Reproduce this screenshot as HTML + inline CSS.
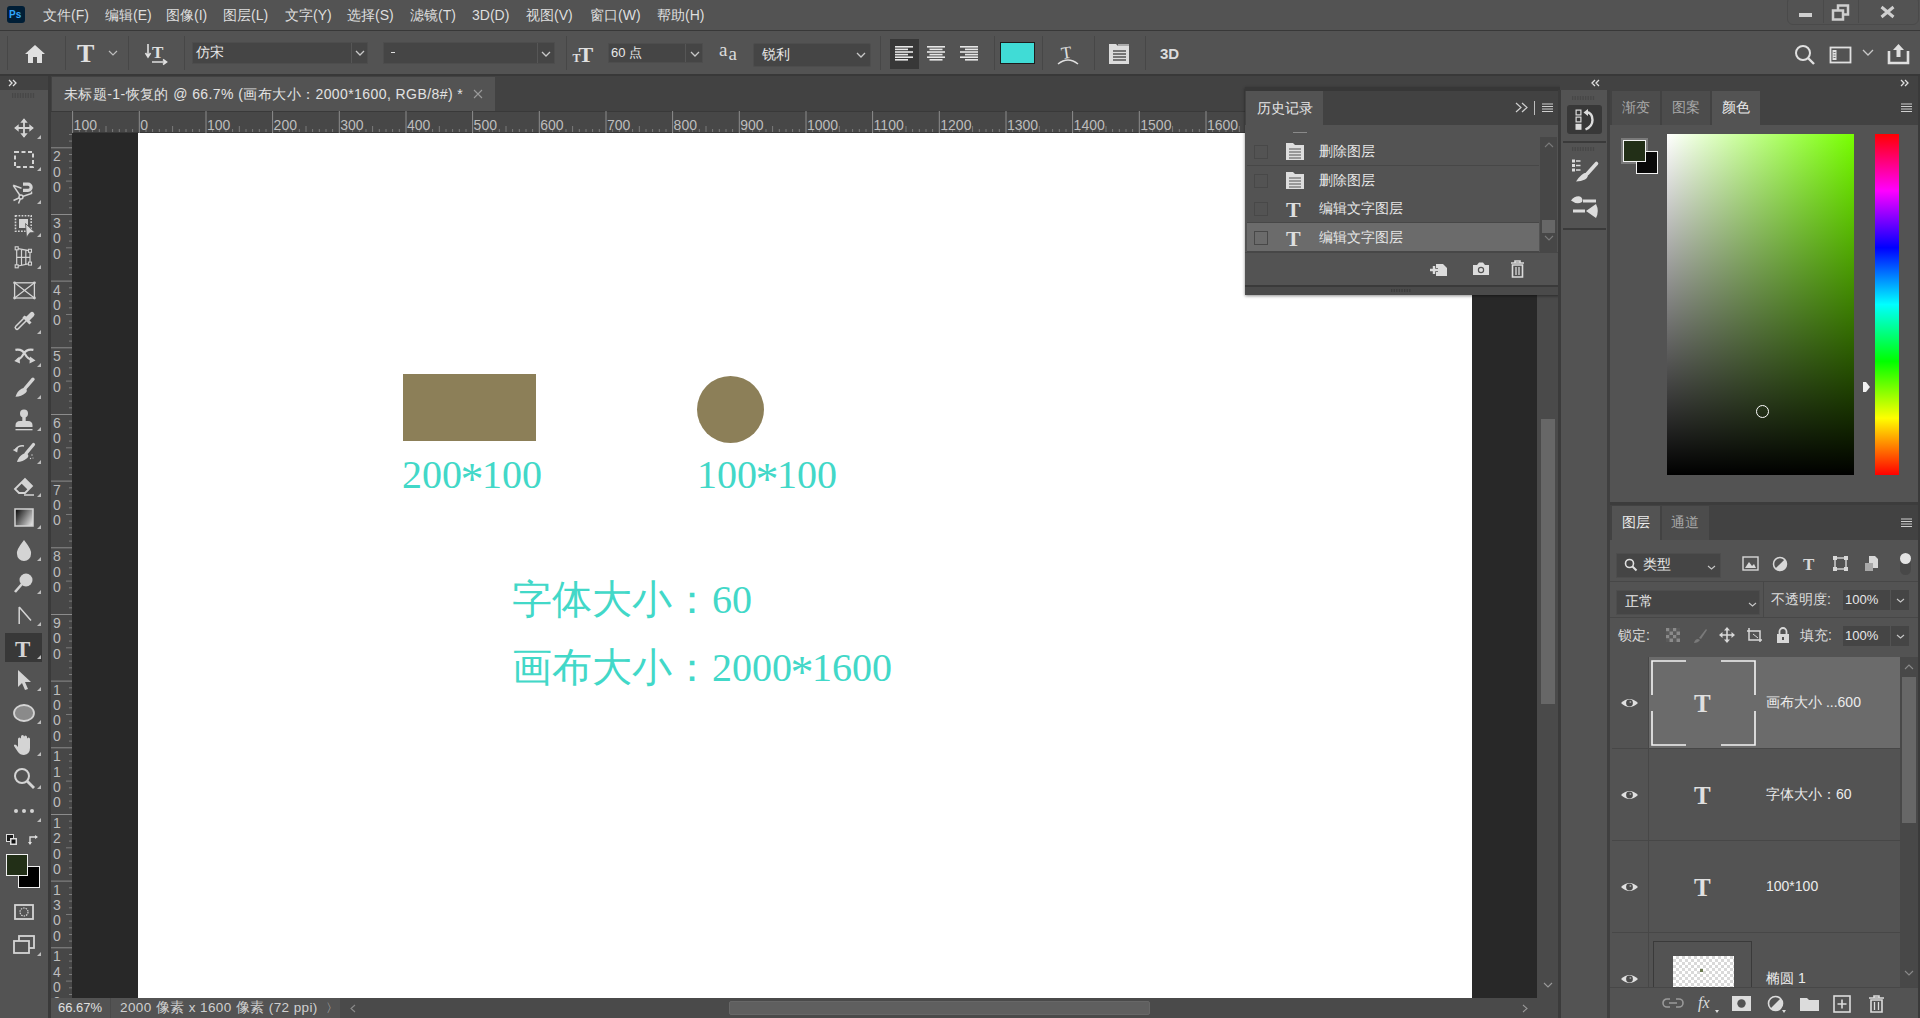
<!DOCTYPE html><html><head><meta charset="utf-8"><style>
html,body{margin:0;padding:0;width:1920px;height:1018px;overflow:hidden;background:#535353;}
body{position:relative;font-family:"Liberation Sans",sans-serif;}
.t{position:absolute;white-space:nowrap;}
svg{overflow:visible}
</style></head><body>
<div style="position:absolute;left:0px;top:0px;width:1920px;height:30px;background:#535353;"></div>
<div style="position:absolute;left:0px;top:30px;width:1920px;height:1px;background:#383838;"></div>
<div style="position:absolute;left:7px;top:6px;width:18px;height:17px;background:#001e36;border-radius:3px;"></div>
<div class="t" style="left:9px;top:7px;font-size:10px;line-height:15px;color:#31a8ff;font-weight:bold;">Ps</div>
<div class="t" style="left:43px;top:5px;font-size:14px;line-height:20px;color:#dedede;">文件(F)</div>
<div class="t" style="left:105px;top:5px;font-size:14px;line-height:20px;color:#dedede;">编辑(E)</div>
<div class="t" style="left:166px;top:5px;font-size:14px;line-height:20px;color:#dedede;">图像(I)</div>
<div class="t" style="left:223px;top:5px;font-size:14px;line-height:20px;color:#dedede;">图层(L)</div>
<div class="t" style="left:285px;top:5px;font-size:14px;line-height:20px;color:#dedede;">文字(Y)</div>
<div class="t" style="left:347px;top:5px;font-size:14px;line-height:20px;color:#dedede;">选择(S)</div>
<div class="t" style="left:410px;top:5px;font-size:14px;line-height:20px;color:#dedede;">滤镜(T)</div>
<div class="t" style="left:472px;top:5px;font-size:14px;line-height:20px;color:#dedede;">3D(D)</div>
<div class="t" style="left:526px;top:5px;font-size:14px;line-height:20px;color:#dedede;">视图(V)</div>
<div class="t" style="left:590px;top:5px;font-size:14px;line-height:20px;color:#dedede;">窗口(W)</div>
<div class="t" style="left:657px;top:5px;font-size:14px;line-height:20px;color:#dedede;">帮助(H)</div>
<div style="position:absolute;left:1787px;top:-4px;width:130px;height:27px;border:1px solid #4a4a4a;border-radius:6px;"></div>
<div style="position:absolute;left:1799px;top:13px;width:13px;height:4px;background:#cfcfcf;"></div>
<div style="position:absolute;left:1823px;top:0px;width:1px;height:23px;background:#4a4a4a;"></div>
<div style="position:absolute;left:1858px;top:0px;width:1px;height:23px;background:#4a4a4a;"></div>
<svg style="position:absolute;left:1831px;top:4px;" width="20" height="17" viewBox="0 0 20 17"><rect x="7" y="1.5" width="10" height="9" fill="none" stroke="#cfcfcf" stroke-width="2.5"/><rect x="2" y="6.5" width="10" height="9" fill="#535353" stroke="#cfcfcf" stroke-width="2.5"/></svg>
<svg style="position:absolute;left:1880px;top:6px;" width="15" height="12" viewBox="0 0 15 12"><path d="M1.5 1 L13.5 11 M13.5 1 L1.5 11" stroke="#cfcfcf" stroke-width="3"/></svg>
<div style="position:absolute;left:0px;top:31px;width:1920px;height:44px;background:#535353;"></div>
<div style="position:absolute;left:0px;top:74px;width:1920px;height:2px;background:#383838;"></div>
<div style="position:absolute;left:7px;top:36px;width:1px;height:34px;background:#474747;"></div>
<div style="position:absolute;left:65px;top:36px;width:1px;height:34px;background:#474747;"></div>
<div style="position:absolute;left:128px;top:36px;width:1px;height:34px;background:#474747;"></div>
<div style="position:absolute;left:184px;top:36px;width:1px;height:34px;background:#474747;"></div>
<div style="position:absolute;left:566px;top:36px;width:1px;height:34px;background:#474747;"></div>
<div style="position:absolute;left:880px;top:36px;width:1px;height:34px;background:#474747;"></div>
<div style="position:absolute;left:994px;top:36px;width:1px;height:34px;background:#474747;"></div>
<div style="position:absolute;left:1042px;top:36px;width:1px;height:34px;background:#474747;"></div>
<div style="position:absolute;left:1094px;top:36px;width:1px;height:34px;background:#474747;"></div>
<div style="position:absolute;left:1145px;top:36px;width:1px;height:34px;background:#474747;"></div>
<svg style="position:absolute;left:24px;top:44px;" width="22" height="20" viewBox="0 0 22 20"><path d="M11 1 L1 10 L4 10 L4 19 L9 19 L9 13 L13 13 L13 19 L18 19 L18 10 L21 10 Z" fill="#e0e0e0"/></svg>
<div class="t" style="left:77px;top:39px;font-size:26px;line-height:30px;color:#e0e0e0;font-family:'Liberation Serif',serif;font-weight:bold;">T</div>
<svg style="position:absolute;left:108px;top:50px;" width="10" height="6" viewBox="0 0 10 6"><path d="M1 1 L5 5 L9 1" fill="none" stroke="#bdbdbd" stroke-width="1.2"/></svg>
<svg style="position:absolute;left:145px;top:42px;" width="24" height="24" viewBox="0 0 24 24"><path d="M3 2 V14 M0.5 11 L3 15 L5.5 11" fill="none" stroke="#e0e0e0" stroke-width="1.6"/><text x="7" y="16" font-family="Liberation Serif" font-weight="bold" font-size="17" fill="#e0e0e0">T</text><path d="M7 20 H21 M18 17.5 L21.5 20 L18 22.5" fill="none" stroke="#e0e0e0" stroke-width="1.6"/></svg>
<div style="position:absolute;left:192px;top:42px;width:176px;height:22px;background:#454545;border:1px solid #4d4d4d;box-sizing:border-box;"></div>
<div style="position:absolute;left:351px;top:43px;width:1px;height:20px;background:#565656;"></div>
<div class="t" style="left:196px;top:43px;font-size:14px;line-height:18px;color:#e8e8e8;">仿宋</div>
<svg style="position:absolute;left:355px;top:50px;" width="10" height="6" viewBox="0 0 10 6"><path d="M1 1 L5 5 L9 1" fill="none" stroke="#c8c8c8" stroke-width="1.3"/></svg>
<div style="position:absolute;left:383px;top:42px;width:172px;height:22px;background:#454545;border:1px solid #4d4d4d;box-sizing:border-box;"></div>
<div style="position:absolute;left:537px;top:43px;width:1px;height:20px;background:#565656;"></div>
<div style="position:absolute;left:391px;top:52px;width:4px;height:1px;background:#e0e0e0;"></div>
<svg style="position:absolute;left:541px;top:51px;" width="10" height="6" viewBox="0 0 10 6"><path d="M1 1 L5 5 L9 1" fill="none" stroke="#c8c8c8" stroke-width="1.3"/></svg>
<svg style="position:absolute;left:572px;top:41px;" width="24" height="22" viewBox="0 0 24 22"><text x="0.5" y="21" font-family="Liberation Serif" font-weight="bold" font-size="12" fill="#e0e0e0">T</text><text x="6.5" y="20.5" font-family="Liberation Serif" font-weight="bold" font-size="22" fill="#e0e0e0">T</text></svg>
<div style="position:absolute;left:608px;top:43px;width:95px;height:20px;background:#454545;border:1px solid #4d4d4d;box-sizing:border-box;"></div>
<div style="position:absolute;left:685px;top:44px;width:1px;height:18px;background:#565656;"></div>
<div class="t" style="left:611px;top:44px;font-size:13px;line-height:17px;color:#e8e8e8;">60 点</div>
<svg style="position:absolute;left:690px;top:51px;" width="10" height="6" viewBox="0 0 10 6"><path d="M1 1 L5 5 L9 1" fill="none" stroke="#c8c8c8" stroke-width="1.3"/></svg>
<svg style="position:absolute;left:718px;top:43px;" width="22" height="22" viewBox="0 0 22 22"><text x="1" y="12.5" font-family="Liberation Serif" font-size="19" fill="#dcdcdc">a</text><text x="10.5" y="16.8" font-family="Liberation Serif" font-size="19" fill="#dcdcdc">a</text></svg>
<div style="position:absolute;left:753px;top:43px;width:118px;height:24px;background:#454545;border:1px solid #4d4d4d;box-sizing:border-box;border-radius:2px;"></div>
<div class="t" style="left:762px;top:45px;font-size:14px;line-height:18px;color:#e8e8e8;">锐利</div>
<svg style="position:absolute;left:856px;top:52px;" width="10" height="6" viewBox="0 0 10 6"><path d="M1 1 L5 5 L9 1" fill="none" stroke="#c8c8c8" stroke-width="1.3"/></svg>
<div style="position:absolute;left:890px;top:39px;width:29px;height:30px;background:#383838;"></div>
<svg style="position:absolute;left:895px;top:44px;" width="18" height="18" viewBox="0 0 18 18"><rect x="0" y="2.0" width="18" height="1.6" fill="#e6e6e6"/><rect x="0" y="4.6" width="13" height="1.6" fill="#e6e6e6"/><rect x="0" y="7.2" width="18" height="1.6" fill="#e6e6e6"/><rect x="0" y="9.8" width="13" height="1.6" fill="#e6e6e6"/><rect x="0" y="12.4" width="18" height="1.6" fill="#e6e6e6"/><rect x="0" y="15.0" width="13" height="1.6" fill="#e6e6e6"/></svg>
<svg style="position:absolute;left:927px;top:44px;" width="18" height="18" viewBox="0 0 18 18"><rect x="0.0" y="2.0" width="18" height="1.6" fill="#e6e6e6"/><rect x="2.5" y="4.6" width="13" height="1.6" fill="#e6e6e6"/><rect x="0.0" y="7.2" width="18" height="1.6" fill="#e6e6e6"/><rect x="2.5" y="9.8" width="13" height="1.6" fill="#e6e6e6"/><rect x="0.0" y="12.4" width="18" height="1.6" fill="#e6e6e6"/><rect x="2.5" y="15.0" width="13" height="1.6" fill="#e6e6e6"/></svg>
<svg style="position:absolute;left:960px;top:44px;" width="18" height="18" viewBox="0 0 18 18"><rect x="0" y="2.0" width="18" height="1.6" fill="#e6e6e6"/><rect x="5" y="4.6" width="13" height="1.6" fill="#e6e6e6"/><rect x="0" y="7.2" width="18" height="1.6" fill="#e6e6e6"/><rect x="5" y="9.8" width="13" height="1.6" fill="#e6e6e6"/><rect x="0" y="12.4" width="18" height="1.6" fill="#e6e6e6"/><rect x="5" y="15.0" width="13" height="1.6" fill="#e6e6e6"/></svg>
<div style="position:absolute;left:1000px;top:42px;width:35px;height:22px;background:#40dcd6;border:1px solid #1c1c1c;box-sizing:border-box;"></div>
<svg style="position:absolute;left:1056px;top:41px;" width="24" height="26" viewBox="0 0 24 26"><text x="5" y="17" font-family="Liberation Serif" font-size="17" fill="#e0e0e0" transform="rotate(-8 12 10)">T</text><path d="M2 23 Q12 15 22 23" fill="none" stroke="#e0e0e0" stroke-width="1.5"/></svg>
<svg style="position:absolute;left:1108px;top:43px;" width="22" height="22" viewBox="0 0 22 22"><path d="M1 1 H8 L10 3 H21 V21 H1 Z" fill="#dcdcdc"/><rect x="10" y="1" width="11" height="2" fill="#aaa"/><path d="M5 8 H18 M5 11 H18 M5 14 H18 M5 17 H18" stroke="#535353" stroke-width="1.3"/></svg>
<div class="t" style="left:1160px;top:44px;font-size:15px;line-height:20px;color:#dcdcdc;font-weight:bold;">3D</div>
<svg style="position:absolute;left:1794px;top:44px;" width="22" height="22" viewBox="0 0 22 22"><circle cx="9" cy="9" r="7" fill="none" stroke="#e0e0e0" stroke-width="2"/><path d="M14 14 L20 20" stroke="#e0e0e0" stroke-width="2.4"/></svg>
<svg style="position:absolute;left:1829px;top:46px;" width="24" height="19" viewBox="0 0 24 19"><rect x="1.5" y="1.5" width="20" height="15" fill="none" stroke="#e0e0e0" stroke-width="1.8"/><rect x="3.5" y="4" width="4" height="10" fill="#e0e0e0"/><path d="M4.5 6.5 H6.5 M4.5 9 H6.5 M4.5 11.5 H6.5" stroke="#535353" stroke-width="0.8"/></svg>
<svg style="position:absolute;left:1862px;top:49px;" width="12" height="7" viewBox="0 0 12 7"><path d="M1 1 L6 6 L11 1" fill="none" stroke="#c8c8c8" stroke-width="1.3"/></svg>
<svg style="position:absolute;left:1887px;top:42px;" width="24" height="23" viewBox="0 0 24 23"><path d="M2 9 V21 H21 V9" fill="none" stroke="#e0e0e0" stroke-width="2.6"/><path d="M11.5 2 L6 8 H9.5 V15 H13.5 V8 H17 Z" fill="#e0e0e0"/></svg>
<div style="position:absolute;left:0px;top:76px;width:48px;height:942px;background:#535353;"></div>
<div style="position:absolute;left:0px;top:76px;width:48px;height:14px;background:#424242;"></div>
<svg style="position:absolute;left:8px;top:79px;" width="10" height="8" viewBox="0 0 10 8"><path d="M1 1 L4 4 L1 7 M5 1 L8 4 L5 7" fill="none" stroke="#e0e0e0" stroke-width="1.3"/></svg>
<div style="position:absolute;left:48px;top:76px;width:3px;height:942px;background:#3a3a3a;"></div>
<svg style="position:absolute;left:12px;top:93px;" width="24" height="5" viewBox="0 0 24 5"><rect x="0.0" y="0" width="1.3" height="5" fill="#474747"/><rect x="2.6" y="0" width="1.3" height="5" fill="#474747"/><rect x="5.2" y="0" width="1.3" height="5" fill="#474747"/><rect x="7.800000000000001" y="0" width="1.3" height="5" fill="#474747"/><rect x="10.4" y="0" width="1.3" height="5" fill="#474747"/><rect x="13.0" y="0" width="1.3" height="5" fill="#474747"/><rect x="15.600000000000001" y="0" width="1.3" height="5" fill="#474747"/><rect x="18.2" y="0" width="1.3" height="5" fill="#474747"/><rect x="20.8" y="0" width="1.3" height="5" fill="#474747"/></svg>
<svg style="position:absolute;left:12px;top:116px;" width="24" height="24" viewBox="0 0 24 24"><g transform="translate(12 12) scale(0.82) translate(-12 -12)"><path d="M12 1 V23 M1 12 H23" stroke="#d4d4d4" stroke-width="2.2"/><path d="M12 0 L7.5 5.5 H16.5 Z M12 24 L7.5 18.5 H16.5 Z M0 12 L5.5 7.5 V16.5 Z M24 12 L18.5 7.5 V16.5 Z" fill="#d4d4d4"/></g></svg>
<svg style="position:absolute;left:37px;top:135px;" width="4" height="4" viewBox="0 0 4 4"><path d="M4 0 V4 H0 Z" fill="#bdbdbd"/></svg>
<svg style="position:absolute;left:12px;top:148px;" width="24" height="24" viewBox="0 0 24 24"><rect x="3" y="4" width="18" height="15" fill="none" stroke="#d4d4d4" stroke-width="2" stroke-dasharray="4 2.5"/></svg>
<svg style="position:absolute;left:37px;top:167px;" width="4" height="4" viewBox="0 0 4 4"><path d="M4 0 V4 H0 Z" fill="#bdbdbd"/></svg>
<svg style="position:absolute;left:12px;top:181px;" width="24" height="24" viewBox="0 0 24 24"><path d="M11 3.1 H16 A3.15 3.15 0 0 1 16 9.4 H11" fill="none" stroke="#d4d4d4" stroke-width="3.2"/><path d="M1.2 4.3 L9.5 7.2 M1.2 4.3 L9 16 M9 16 L1.5 19.5 M9 16 L6.5 22.5 M9 16 L19.5 12.5 L19.5 10.5" fill="none" stroke="#d4d4d4" stroke-width="1.5"/><circle cx="9" cy="16" r="2" fill="#535353" stroke="#d4d4d4" stroke-width="1.4"/></svg>
<svg style="position:absolute;left:37px;top:200px;" width="4" height="4" viewBox="0 0 4 4"><path d="M4 0 V4 H0 Z" fill="#bdbdbd"/></svg>
<svg style="position:absolute;left:12px;top:214px;" width="26" height="26" viewBox="0 0 26 26"><rect x="3.5" y="1.7" width="15.7" height="15.5" fill="none" stroke="#d4d4d4" stroke-width="1.6" stroke-dasharray="1.7 1.35"/><rect x="7" y="5" width="9" height="9" fill="#d4d4d4"/><path d="M13.5 9.5 L23 18.5 L17.8 18.8 L14.5 23.5 Z" fill="#d4d4d4" stroke="#535353" stroke-width="0.8"/></svg>
<svg style="position:absolute;left:37px;top:233px;" width="4" height="4" viewBox="0 0 4 4"><path d="M4 0 V4 H0 Z" fill="#bdbdbd"/></svg>
<svg style="position:absolute;left:12px;top:246px;" width="24" height="24" viewBox="0 0 24 24"><path d="M4.7 2.3 L18 4.8 L18 17.6 L4.7 20.3 Z M9.5 3.2 V19.4 M13.8 4 V18.5 M4.7 11.3 H18" fill="none" stroke="#d4d4d4" stroke-width="1.2"/><g fill="#535353" stroke="#d4d4d4" stroke-width="1.1"><rect x="3.2" y="0.8" width="3" height="3"/><rect x="16.5" y="3.3" width="3" height="3"/><rect x="16.5" y="16.1" width="3" height="3"/><rect x="3.2" y="18.8" width="3" height="3"/></g></svg>
<svg style="position:absolute;left:37px;top:265px;" width="4" height="4" viewBox="0 0 4 4"><path d="M4 0 V4 H0 Z" fill="#bdbdbd"/></svg>
<svg style="position:absolute;left:12px;top:278px;" width="24" height="24" viewBox="0 0 24 24"><rect x="2.6" y="4.8" width="19.8" height="15.2" fill="none" stroke="#d4d4d4" stroke-width="1.3"/><path d="M2.6 4.8 L22.4 20 M22.4 4.8 L2.6 20" stroke="#d4d4d4" stroke-width="1.2"/><g fill="#d4d4d4"><circle cx="2.6" cy="4.8" r="1.4"/><circle cx="22.4" cy="4.8" r="1.4"/><circle cx="2.6" cy="20" r="1.4"/><circle cx="22.4" cy="20" r="1.4"/></g></svg>
<svg style="position:absolute;left:12px;top:311px;" width="24" height="24" viewBox="0 0 24 24"><path d="M5 16.5 L13.5 8" stroke="#d4d4d4" stroke-width="5" stroke-linecap="round"/><path d="M5 16.5 L13.5 8" stroke="#535353" stroke-width="2" stroke-linecap="round"/><path d="M11.5 5.5 L18.5 12.5" stroke="#d4d4d4" stroke-width="3"/><path d="M16 7.5 L20 3.5" stroke="#d4d4d4" stroke-width="5" stroke-linecap="round"/></svg>
<svg style="position:absolute;left:37px;top:330px;" width="4" height="4" viewBox="0 0 4 4"><path d="M4 0 V4 H0 Z" fill="#bdbdbd"/></svg>
<svg style="position:absolute;left:12px;top:344px;" width="26" height="24" viewBox="0 0 26 24"><path d="M3.4 5.8 Q10 4.5 13 10 Q16 15.5 20 15.8 M21.4 5.8 Q14.5 4.5 11.5 10 Q8.5 15.5 5 15.8" fill="none" stroke="#d4d4d4" stroke-width="2.2"/><path d="M23.5 16.5 L18 12.5 L17.5 19.5 Z M2.3 17 L7.5 12.5 L8 19.5 Z" fill="#d4d4d4"/></svg>
<svg style="position:absolute;left:37px;top:363px;" width="4" height="4" viewBox="0 0 4 4"><path d="M4 0 V4 H0 Z" fill="#bdbdbd"/></svg>
<svg style="position:absolute;left:12px;top:376px;" width="24" height="24" viewBox="0 0 24 24"><path d="M21 3.2 L13 12.5" stroke="#d4d4d4" stroke-width="3.4" stroke-linecap="round"/><path d="M3.5 20.8 Q5 15.5 9.5 12.8 Q12.5 11 14.2 13 Q15.8 15 13.5 17 Q9.5 20.5 3.5 20.8 Z" fill="#d4d4d4"/></svg>
<svg style="position:absolute;left:37px;top:395px;" width="4" height="4" viewBox="0 0 4 4"><path d="M4 0 V4 H0 Z" fill="#bdbdbd"/></svg>
<svg style="position:absolute;left:12px;top:408px;" width="24" height="24" viewBox="0 0 24 24"><circle cx="12" cy="5.5" r="4" fill="#d4d4d4"/><rect x="10.3" y="8" width="3.4" height="5" fill="#d4d4d4"/><path d="M3.5 17.5 Q3.5 13 8 13 H16 Q20.5 13 20.5 17.5 V19 H3.5 Z" fill="#d4d4d4"/><rect x="3.5" y="21" width="17" height="1.3" fill="#d4d4d4"/></svg>
<svg style="position:absolute;left:37px;top:427px;" width="4" height="4" viewBox="0 0 4 4"><path d="M4 0 V4 H0 Z" fill="#bdbdbd"/></svg>
<svg style="position:absolute;left:12px;top:441px;" width="24" height="24" viewBox="0 0 24 24"><path d="M21.5 3.5 L14 12.5" stroke="#d4d4d4" stroke-width="3.2" stroke-linecap="round"/><path d="M5 21 Q6.5 15.7 11 13 Q14 11.2 15.7 13.2 Q17.3 15.2 15 17.2 Q11 20.7 5 21 Z" fill="#d4d4d4"/><path d="M3.5 8.5 Q7 4 12 5" fill="none" stroke="#d4d4d4" stroke-width="1.6"/><path d="M0.8 9 L6 6.5 L5.2 11.5 Z" fill="#d4d4d4"/><g fill="#d4d4d4"><circle cx="20" cy="14" r="0.7"/><circle cx="18.5" cy="17.5" r="0.7"/><circle cx="21" cy="17" r="0.6"/></g></svg>
<svg style="position:absolute;left:37px;top:460px;" width="4" height="4" viewBox="0 0 4 4"><path d="M4 0 V4 H0 Z" fill="#bdbdbd"/></svg>
<svg style="position:absolute;left:12px;top:474px;" width="24" height="24" viewBox="0 0 24 24"><path d="M3 15 L13 5 L20 12 L13 19 L7 19 Z" fill="none" stroke="#d4d4d4" stroke-width="1.8"/><path d="M13 5 L20 12 L16 16 L9 9 Z" fill="#d4d4d4"/><path d="M12 21 H22" stroke="#d4d4d4" stroke-width="1.5"/></svg>
<svg style="position:absolute;left:37px;top:493px;" width="4" height="4" viewBox="0 0 4 4"><path d="M4 0 V4 H0 Z" fill="#bdbdbd"/></svg>
<svg style="position:absolute;left:14px;top:508px" width="20" height="19"><defs><linearGradient id="gg" x1="0" y1="0.2" x2="1" y2="0.8"><stop offset="0" stop-color="#111"/><stop offset="1" stop-color="#e0e0e0"/></linearGradient></defs><rect x="1" y="1" width="18" height="17" fill="url(#gg)" stroke="#d4d4d4" stroke-width="1.5"/></svg>
<svg style="position:absolute;left:37px;top:525px;" width="4" height="4" viewBox="0 0 4 4"><path d="M4 0 V4 H0 Z" fill="#bdbdbd"/></svg>
<svg style="position:absolute;left:12px;top:538px;" width="24" height="24" viewBox="0 0 24 24"><path d="M12 2 Q20 12 19 16 A7 7 0 0 1 5 16 Q4 12 12 2 Z" fill="#d4d4d4"/></svg>
<svg style="position:absolute;left:37px;top:557px;" width="4" height="4" viewBox="0 0 4 4"><path d="M4 0 V4 H0 Z" fill="#bdbdbd"/></svg>
<svg style="position:absolute;left:12px;top:571px;" width="24" height="24" viewBox="0 0 24 24"><circle cx="14" cy="9" r="6.5" fill="#d4d4d4"/><path d="M10 13 L3 21" stroke="#d4d4d4" stroke-width="2.6"/></svg>
<svg style="position:absolute;left:37px;top:590px;" width="4" height="4" viewBox="0 0 4 4"><path d="M4 0 V4 H0 Z" fill="#bdbdbd"/></svg>
<svg style="position:absolute;left:12px;top:603px;" width="24" height="24" viewBox="0 0 24 24"><path d="M7.2 4 V21 M7.2 4 L19 17.5" fill="none" stroke="#d4d4d4" stroke-width="1.5"/></svg>
<svg style="position:absolute;left:37px;top:622px;" width="4" height="4" viewBox="0 0 4 4"><path d="M4 0 V4 H0 Z" fill="#bdbdbd"/></svg>
<div style="position:absolute;left:5px;top:633px;width:37px;height:29px;background:#383838;"></div>
<svg style="position:absolute;left:12px;top:636px;" width="24" height="24" viewBox="0 0 24 24"><text x="3" y="21" font-family="Liberation Serif" font-weight="bold" font-size="23" fill="#d4d4d4">T</text></svg>
<svg style="position:absolute;left:37px;top:655px;" width="4" height="4" viewBox="0 0 4 4"><path d="M4 0 V4 H0 Z" fill="#bdbdbd"/></svg>
<svg style="position:absolute;left:12px;top:668px;" width="24" height="24" viewBox="0 0 24 24"><path d="M6 2 L19 14 L13 14 L16 21 L13 22 L10 15 L6 19 Z" fill="#d4d4d4"/></svg>
<svg style="position:absolute;left:37px;top:687px;" width="4" height="4" viewBox="0 0 4 4"><path d="M4 0 V4 H0 Z" fill="#bdbdbd"/></svg>
<svg style="position:absolute;left:12px;top:701px;" width="24" height="24" viewBox="0 0 24 24"><ellipse cx="12" cy="12" rx="10" ry="8" fill="#8a8a8a" stroke="#d4d4d4" stroke-width="1.8"/></svg>
<svg style="position:absolute;left:37px;top:720px;" width="4" height="4" viewBox="0 0 4 4"><path d="M4 0 V4 H0 Z" fill="#bdbdbd"/></svg>
<svg style="position:absolute;left:12px;top:733px;" width="24" height="24" viewBox="0 0 24 24"><path d="M6 13 V6 Q6 4.5 7.5 4.5 Q9 4.5 9 6 V11 V3.5 Q9 2 10.5 2 Q12 2 12 3.5 V11 V4 Q12 2.5 13.5 2.5 Q15 2.5 15 4 V11 V6 Q15 4.5 16.5 4.5 Q18 4.5 18 6 V15 Q18 21 12 22 Q8 22 6 19 L2 13 Q1.5 11.5 3 11.5 Q4.5 11.5 6 14 Z" fill="#d4d4d4"/></svg>
<svg style="position:absolute;left:37px;top:752px;" width="4" height="4" viewBox="0 0 4 4"><path d="M4 0 V4 H0 Z" fill="#bdbdbd"/></svg>
<svg style="position:absolute;left:12px;top:766px;" width="24" height="24" viewBox="0 0 24 24"><circle cx="10" cy="10" r="7" fill="none" stroke="#d4d4d4" stroke-width="2"/><path d="M15 15 L22 22" stroke="#d4d4d4" stroke-width="2.8"/></svg>
<svg style="position:absolute;left:37px;top:785px;" width="4" height="4" viewBox="0 0 4 4"><path d="M4 0 V4 H0 Z" fill="#bdbdbd"/></svg>
<svg style="position:absolute;left:12px;top:799px;" width="24" height="24" viewBox="0 0 24 24"><circle cx="4" cy="12" r="2" fill="#d4d4d4"/><circle cx="12" cy="12" r="2" fill="#d4d4d4"/><circle cx="20" cy="12" r="2" fill="#d4d4d4"/></svg>
<svg style="position:absolute;left:37px;top:818px;" width="4" height="4" viewBox="0 0 4 4"><path d="M4 0 V4 H0 Z" fill="#bdbdbd"/></svg>
<svg style="position:absolute;left:6px;top:834px;" width="12" height="12" viewBox="0 0 12 12"><rect x="0.5" y="0.5" width="7" height="7" fill="#1a1a1a" stroke="#ddd" stroke-width="1"/><rect x="4" y="4" width="7" height="7" fill="#ddd"/><rect x="5.5" y="5.5" width="4" height="4" fill="#111"/></svg>
<svg style="position:absolute;left:27px;top:833px;" width="14" height="14" viewBox="0 0 14 14"><path d="M3 11 V4 H10" fill="none" stroke="#ddd" stroke-width="1.4"/><path d="M1 9 L3 12 L5 9 Z M8 2 L11 4 L8 6 Z" fill="#ddd"/></svg>
<div style="position:absolute;left:18px;top:866px;width:22px;height:22px;background:#000;border:1.5px solid #f0f0f0;box-sizing:border-box;"></div>
<div style="position:absolute;left:6px;top:854px;width:22px;height:22px;background:#222f17;border:1.5px solid #f0f0f0;box-sizing:border-box;"></div>
<svg style="position:absolute;left:12px;top:900px;" width="24" height="24" viewBox="0 0 24 24"><rect x="3" y="5" width="18" height="14" fill="none" stroke="#d4d4d4" stroke-width="1.8"/><circle cx="12" cy="12" r="4" fill="none" stroke="#d4d4d4" stroke-width="1.2" stroke-dasharray="1.5 1"/></svg>
<svg style="position:absolute;left:12px;top:933px;" width="24" height="24" viewBox="0 0 24 24"><rect x="7" y="3" width="15" height="12" fill="none" stroke="#d4d4d4" stroke-width="1.8"/><rect x="2" y="8" width="15" height="12" fill="#535353" stroke="#d4d4d4" stroke-width="1.8"/></svg>
<svg style="position:absolute;left:37px;top:952px;" width="4" height="4" viewBox="0 0 4 4"><path d="M4 0 V4 H0 Z" fill="#bdbdbd"/></svg>
<div style="position:absolute;left:51px;top:76px;width:1509px;height:35px;background:#424242;"></div>
<div style="position:absolute;left:52px;top:77px;width:443px;height:34px;background:#535353;"></div>
<div class="t" style="left:64px;top:85px;font-size:14px;line-height:18px;color:#e2e2e2;letter-spacing:0.42px;">未标题-1-恢复的 @ 66.7% (画布大小：2000*1600, RGB/8#) *</div>
<svg style="position:absolute;left:473px;top:89px;" width="10" height="10" viewBox="0 0 10 10"><path d="M1 1 L9 9 M9 1 L1 9" stroke="#9a9a9a" stroke-width="1.1"/></svg>
<div style="position:absolute;left:51px;top:111px;width:1509px;height:22px;background:#474747;"></div>
<div style="position:absolute;left:51px;top:133px;width:21px;height:865px;background:#474747;"></div>
<div style="position:absolute;left:51px;top:111px;width:1509px;height:1px;background:#393939;"></div>
<div style="position:absolute;left:72px;top:132px;width:1465px;height:1px;background:#393939;"></div>
<div style="position:absolute;left:72px;top:133px;width:1465px;height:865px;background:#282828;"></div>
<div style="position:absolute;left:138px;top:133px;width:1334px;height:865px;background:#ffffff;"></div>
<div style="position:absolute;left:1537px;top:133px;width:23px;height:865px;background:#4a4a4a;"></div>
<div style="position:absolute;left:1541px;top:419px;width:14px;height:285px;background:#676767;"></div>
<svg style="position:absolute;left:1543px;top:982px;" width="10" height="6" viewBox="0 0 10 6"><path d="M1 1 L5 5 L9 1" fill="none" stroke="#9a9a9a" stroke-width="1.1"/></svg>
<div style="position:absolute;left:51px;top:998px;width:1509px;height:20px;background:#4a4a4a;"></div>
<div style="position:absolute;left:51px;top:998px;width:59px;height:20px;background:#535353;"></div>
<div style="position:absolute;left:111px;top:998px;width:229px;height:20px;background:#535353;"></div>
<div class="t" style="left:58px;top:999px;font-size:13px;line-height:18px;color:#e0e0e0;">66.67%</div>
<div class="t" style="left:120px;top:999px;font-size:13.5px;line-height:18px;color:#d0d0d0;letter-spacing:0.4px;">2000 像素 x 1600 像素 (72 ppi)</div>
<div class="t" style="left:326px;top:999px;font-size:12px;line-height:18px;color:#bdbdbd;">〉</div>
<svg style="position:absolute;left:350px;top:1004px;" width="6" height="9" viewBox="0 0 6 9"><path d="M5 1 L1 4.5 L5 8" fill="none" stroke="#8a8a8a" stroke-width="1.1"/></svg>
<div style="position:absolute;left:729px;top:1001px;width:421px;height:14px;background:#5f5f5f;border:1px solid #676767;box-sizing:border-box;border-radius:2px;"></div>
<svg style="position:absolute;left:1522px;top:1004px;" width="6" height="9" viewBox="0 0 6 9"><path d="M1 1 L5 4.5 L1 8" fill="none" stroke="#9a9a9a" stroke-width="1.1"/></svg>
<svg style="position:absolute;left:51px;top:111px;overflow:hidden" width="1194" height="22"><g><rect x="21.1" y="0" width="1" height="22" fill="#8c8c8c"/><rect x="27.8" y="18" width="1" height="3" fill="#7a7a7a"/><rect x="34.5" y="18" width="1" height="3" fill="#7a7a7a"/><rect x="41.1" y="18" width="1" height="3" fill="#7a7a7a"/><rect x="47.8" y="18" width="1" height="3" fill="#7a7a7a"/><rect x="54.5" y="15" width="1" height="6" fill="#7a7a7a"/><rect x="61.1" y="18" width="1" height="3" fill="#7a7a7a"/><rect x="67.8" y="18" width="1" height="3" fill="#7a7a7a"/><rect x="74.5" y="18" width="1" height="3" fill="#7a7a7a"/><rect x="81.1" y="18" width="1" height="3" fill="#7a7a7a"/><text x="22.6" y="19" font-family="Liberation Sans" font-size="14" fill="#bdbdbd">100</text><rect x="87.8" y="0" width="1" height="22" fill="#8c8c8c"/><rect x="94.5" y="18" width="1" height="3" fill="#7a7a7a"/><rect x="101.1" y="18" width="1" height="3" fill="#7a7a7a"/><rect x="107.8" y="18" width="1" height="3" fill="#7a7a7a"/><rect x="114.5" y="18" width="1" height="3" fill="#7a7a7a"/><rect x="121.1" y="15" width="1" height="6" fill="#7a7a7a"/><rect x="127.8" y="18" width="1" height="3" fill="#7a7a7a"/><rect x="134.5" y="18" width="1" height="3" fill="#7a7a7a"/><rect x="141.1" y="18" width="1" height="3" fill="#7a7a7a"/><rect x="147.8" y="18" width="1" height="3" fill="#7a7a7a"/><text x="89.3" y="19" font-family="Liberation Sans" font-size="14" fill="#bdbdbd">0</text><rect x="154.5" y="0" width="1" height="22" fill="#8c8c8c"/><rect x="161.1" y="18" width="1" height="3" fill="#7a7a7a"/><rect x="167.8" y="18" width="1" height="3" fill="#7a7a7a"/><rect x="174.5" y="18" width="1" height="3" fill="#7a7a7a"/><rect x="181.1" y="18" width="1" height="3" fill="#7a7a7a"/><rect x="187.8" y="15" width="1" height="6" fill="#7a7a7a"/><rect x="194.5" y="18" width="1" height="3" fill="#7a7a7a"/><rect x="201.1" y="18" width="1" height="3" fill="#7a7a7a"/><rect x="207.8" y="18" width="1" height="3" fill="#7a7a7a"/><rect x="214.5" y="18" width="1" height="3" fill="#7a7a7a"/><text x="156.0" y="19" font-family="Liberation Sans" font-size="14" fill="#bdbdbd">100</text><rect x="221.1" y="0" width="1" height="22" fill="#8c8c8c"/><rect x="227.8" y="18" width="1" height="3" fill="#7a7a7a"/><rect x="234.5" y="18" width="1" height="3" fill="#7a7a7a"/><rect x="241.1" y="18" width="1" height="3" fill="#7a7a7a"/><rect x="247.8" y="18" width="1" height="3" fill="#7a7a7a"/><rect x="254.5" y="15" width="1" height="6" fill="#7a7a7a"/><rect x="261.1" y="18" width="1" height="3" fill="#7a7a7a"/><rect x="267.8" y="18" width="1" height="3" fill="#7a7a7a"/><rect x="274.5" y="18" width="1" height="3" fill="#7a7a7a"/><rect x="281.1" y="18" width="1" height="3" fill="#7a7a7a"/><text x="222.6" y="19" font-family="Liberation Sans" font-size="14" fill="#bdbdbd">200</text><rect x="287.8" y="0" width="1" height="22" fill="#8c8c8c"/><rect x="294.5" y="18" width="1" height="3" fill="#7a7a7a"/><rect x="301.1" y="18" width="1" height="3" fill="#7a7a7a"/><rect x="307.8" y="18" width="1" height="3" fill="#7a7a7a"/><rect x="314.5" y="18" width="1" height="3" fill="#7a7a7a"/><rect x="321.1" y="15" width="1" height="6" fill="#7a7a7a"/><rect x="327.8" y="18" width="1" height="3" fill="#7a7a7a"/><rect x="334.5" y="18" width="1" height="3" fill="#7a7a7a"/><rect x="341.1" y="18" width="1" height="3" fill="#7a7a7a"/><rect x="347.8" y="18" width="1" height="3" fill="#7a7a7a"/><text x="289.3" y="19" font-family="Liberation Sans" font-size="14" fill="#bdbdbd">300</text><rect x="354.5" y="0" width="1" height="22" fill="#8c8c8c"/><rect x="361.1" y="18" width="1" height="3" fill="#7a7a7a"/><rect x="367.8" y="18" width="1" height="3" fill="#7a7a7a"/><rect x="374.5" y="18" width="1" height="3" fill="#7a7a7a"/><rect x="381.1" y="18" width="1" height="3" fill="#7a7a7a"/><rect x="387.8" y="15" width="1" height="6" fill="#7a7a7a"/><rect x="394.5" y="18" width="1" height="3" fill="#7a7a7a"/><rect x="401.1" y="18" width="1" height="3" fill="#7a7a7a"/><rect x="407.8" y="18" width="1" height="3" fill="#7a7a7a"/><rect x="414.5" y="18" width="1" height="3" fill="#7a7a7a"/><text x="356.0" y="19" font-family="Liberation Sans" font-size="14" fill="#bdbdbd">400</text><rect x="421.1" y="0" width="1" height="22" fill="#8c8c8c"/><rect x="427.8" y="18" width="1" height="3" fill="#7a7a7a"/><rect x="434.5" y="18" width="1" height="3" fill="#7a7a7a"/><rect x="441.1" y="18" width="1" height="3" fill="#7a7a7a"/><rect x="447.8" y="18" width="1" height="3" fill="#7a7a7a"/><rect x="454.5" y="15" width="1" height="6" fill="#7a7a7a"/><rect x="461.1" y="18" width="1" height="3" fill="#7a7a7a"/><rect x="467.8" y="18" width="1" height="3" fill="#7a7a7a"/><rect x="474.5" y="18" width="1" height="3" fill="#7a7a7a"/><rect x="481.1" y="18" width="1" height="3" fill="#7a7a7a"/><text x="422.6" y="19" font-family="Liberation Sans" font-size="14" fill="#bdbdbd">500</text><rect x="487.8" y="0" width="1" height="22" fill="#8c8c8c"/><rect x="494.5" y="18" width="1" height="3" fill="#7a7a7a"/><rect x="501.1" y="18" width="1" height="3" fill="#7a7a7a"/><rect x="507.8" y="18" width="1" height="3" fill="#7a7a7a"/><rect x="514.5" y="18" width="1" height="3" fill="#7a7a7a"/><rect x="521.1" y="15" width="1" height="6" fill="#7a7a7a"/><rect x="527.8" y="18" width="1" height="3" fill="#7a7a7a"/><rect x="534.5" y="18" width="1" height="3" fill="#7a7a7a"/><rect x="541.1" y="18" width="1" height="3" fill="#7a7a7a"/><rect x="547.8" y="18" width="1" height="3" fill="#7a7a7a"/><text x="489.3" y="19" font-family="Liberation Sans" font-size="14" fill="#bdbdbd">600</text><rect x="554.5" y="0" width="1" height="22" fill="#8c8c8c"/><rect x="561.1" y="18" width="1" height="3" fill="#7a7a7a"/><rect x="567.8" y="18" width="1" height="3" fill="#7a7a7a"/><rect x="574.5" y="18" width="1" height="3" fill="#7a7a7a"/><rect x="581.1" y="18" width="1" height="3" fill="#7a7a7a"/><rect x="587.8" y="15" width="1" height="6" fill="#7a7a7a"/><rect x="594.5" y="18" width="1" height="3" fill="#7a7a7a"/><rect x="601.1" y="18" width="1" height="3" fill="#7a7a7a"/><rect x="607.8" y="18" width="1" height="3" fill="#7a7a7a"/><rect x="614.5" y="18" width="1" height="3" fill="#7a7a7a"/><text x="556.0" y="19" font-family="Liberation Sans" font-size="14" fill="#bdbdbd">700</text><rect x="621.1" y="0" width="1" height="22" fill="#8c8c8c"/><rect x="627.8" y="18" width="1" height="3" fill="#7a7a7a"/><rect x="634.5" y="18" width="1" height="3" fill="#7a7a7a"/><rect x="641.1" y="18" width="1" height="3" fill="#7a7a7a"/><rect x="647.8" y="18" width="1" height="3" fill="#7a7a7a"/><rect x="654.5" y="15" width="1" height="6" fill="#7a7a7a"/><rect x="661.1" y="18" width="1" height="3" fill="#7a7a7a"/><rect x="667.8" y="18" width="1" height="3" fill="#7a7a7a"/><rect x="674.5" y="18" width="1" height="3" fill="#7a7a7a"/><rect x="681.1" y="18" width="1" height="3" fill="#7a7a7a"/><text x="622.6" y="19" font-family="Liberation Sans" font-size="14" fill="#bdbdbd">800</text><rect x="687.8" y="0" width="1" height="22" fill="#8c8c8c"/><rect x="694.5" y="18" width="1" height="3" fill="#7a7a7a"/><rect x="701.1" y="18" width="1" height="3" fill="#7a7a7a"/><rect x="707.8" y="18" width="1" height="3" fill="#7a7a7a"/><rect x="714.5" y="18" width="1" height="3" fill="#7a7a7a"/><rect x="721.1" y="15" width="1" height="6" fill="#7a7a7a"/><rect x="727.8" y="18" width="1" height="3" fill="#7a7a7a"/><rect x="734.5" y="18" width="1" height="3" fill="#7a7a7a"/><rect x="741.1" y="18" width="1" height="3" fill="#7a7a7a"/><rect x="747.8" y="18" width="1" height="3" fill="#7a7a7a"/><text x="689.3" y="19" font-family="Liberation Sans" font-size="14" fill="#bdbdbd">900</text><rect x="754.5" y="0" width="1" height="22" fill="#8c8c8c"/><rect x="761.1" y="18" width="1" height="3" fill="#7a7a7a"/><rect x="767.8" y="18" width="1" height="3" fill="#7a7a7a"/><rect x="774.5" y="18" width="1" height="3" fill="#7a7a7a"/><rect x="781.1" y="18" width="1" height="3" fill="#7a7a7a"/><rect x="787.8" y="15" width="1" height="6" fill="#7a7a7a"/><rect x="794.5" y="18" width="1" height="3" fill="#7a7a7a"/><rect x="801.1" y="18" width="1" height="3" fill="#7a7a7a"/><rect x="807.8" y="18" width="1" height="3" fill="#7a7a7a"/><rect x="814.5" y="18" width="1" height="3" fill="#7a7a7a"/><text x="756.0" y="19" font-family="Liberation Sans" font-size="14" fill="#bdbdbd">1000</text><rect x="821.1" y="0" width="1" height="22" fill="#8c8c8c"/><rect x="827.8" y="18" width="1" height="3" fill="#7a7a7a"/><rect x="834.5" y="18" width="1" height="3" fill="#7a7a7a"/><rect x="841.1" y="18" width="1" height="3" fill="#7a7a7a"/><rect x="847.8" y="18" width="1" height="3" fill="#7a7a7a"/><rect x="854.5" y="15" width="1" height="6" fill="#7a7a7a"/><rect x="861.1" y="18" width="1" height="3" fill="#7a7a7a"/><rect x="867.8" y="18" width="1" height="3" fill="#7a7a7a"/><rect x="874.5" y="18" width="1" height="3" fill="#7a7a7a"/><rect x="881.1" y="18" width="1" height="3" fill="#7a7a7a"/><text x="822.6" y="19" font-family="Liberation Sans" font-size="14" fill="#bdbdbd">1100</text><rect x="887.8" y="0" width="1" height="22" fill="#8c8c8c"/><rect x="894.5" y="18" width="1" height="3" fill="#7a7a7a"/><rect x="901.1" y="18" width="1" height="3" fill="#7a7a7a"/><rect x="907.8" y="18" width="1" height="3" fill="#7a7a7a"/><rect x="914.5" y="18" width="1" height="3" fill="#7a7a7a"/><rect x="921.1" y="15" width="1" height="6" fill="#7a7a7a"/><rect x="927.8" y="18" width="1" height="3" fill="#7a7a7a"/><rect x="934.5" y="18" width="1" height="3" fill="#7a7a7a"/><rect x="941.1" y="18" width="1" height="3" fill="#7a7a7a"/><rect x="947.8" y="18" width="1" height="3" fill="#7a7a7a"/><text x="889.3" y="19" font-family="Liberation Sans" font-size="14" fill="#bdbdbd">1200</text><rect x="954.5" y="0" width="1" height="22" fill="#8c8c8c"/><rect x="961.1" y="18" width="1" height="3" fill="#7a7a7a"/><rect x="967.8" y="18" width="1" height="3" fill="#7a7a7a"/><rect x="974.5" y="18" width="1" height="3" fill="#7a7a7a"/><rect x="981.1" y="18" width="1" height="3" fill="#7a7a7a"/><rect x="987.8" y="15" width="1" height="6" fill="#7a7a7a"/><rect x="994.5" y="18" width="1" height="3" fill="#7a7a7a"/><rect x="1001.1" y="18" width="1" height="3" fill="#7a7a7a"/><rect x="1007.8" y="18" width="1" height="3" fill="#7a7a7a"/><rect x="1014.5" y="18" width="1" height="3" fill="#7a7a7a"/><text x="956.0" y="19" font-family="Liberation Sans" font-size="14" fill="#bdbdbd">1300</text><rect x="1021.1" y="0" width="1" height="22" fill="#8c8c8c"/><rect x="1027.8" y="18" width="1" height="3" fill="#7a7a7a"/><rect x="1034.5" y="18" width="1" height="3" fill="#7a7a7a"/><rect x="1041.1" y="18" width="1" height="3" fill="#7a7a7a"/><rect x="1047.8" y="18" width="1" height="3" fill="#7a7a7a"/><rect x="1054.5" y="15" width="1" height="6" fill="#7a7a7a"/><rect x="1061.1" y="18" width="1" height="3" fill="#7a7a7a"/><rect x="1067.8" y="18" width="1" height="3" fill="#7a7a7a"/><rect x="1074.5" y="18" width="1" height="3" fill="#7a7a7a"/><rect x="1081.1" y="18" width="1" height="3" fill="#7a7a7a"/><text x="1022.6" y="19" font-family="Liberation Sans" font-size="14" fill="#bdbdbd">1400</text><rect x="1087.8" y="0" width="1" height="22" fill="#8c8c8c"/><rect x="1094.5" y="18" width="1" height="3" fill="#7a7a7a"/><rect x="1101.1" y="18" width="1" height="3" fill="#7a7a7a"/><rect x="1107.8" y="18" width="1" height="3" fill="#7a7a7a"/><rect x="1114.5" y="18" width="1" height="3" fill="#7a7a7a"/><rect x="1121.1" y="15" width="1" height="6" fill="#7a7a7a"/><rect x="1127.8" y="18" width="1" height="3" fill="#7a7a7a"/><rect x="1134.5" y="18" width="1" height="3" fill="#7a7a7a"/><rect x="1141.1" y="18" width="1" height="3" fill="#7a7a7a"/><rect x="1147.8" y="18" width="1" height="3" fill="#7a7a7a"/><text x="1089.3" y="19" font-family="Liberation Sans" font-size="14" fill="#bdbdbd">1500</text><rect x="1154.5" y="0" width="1" height="22" fill="#8c8c8c"/><rect x="1161.1" y="18" width="1" height="3" fill="#7a7a7a"/><rect x="1167.8" y="18" width="1" height="3" fill="#7a7a7a"/><rect x="1174.5" y="18" width="1" height="3" fill="#7a7a7a"/><rect x="1181.1" y="18" width="1" height="3" fill="#7a7a7a"/><rect x="1187.8" y="15" width="1" height="6" fill="#7a7a7a"/><rect x="1194.5" y="18" width="1" height="3" fill="#7a7a7a"/><rect x="1201.1" y="18" width="1" height="3" fill="#7a7a7a"/><rect x="1207.8" y="18" width="1" height="3" fill="#7a7a7a"/><rect x="1214.5" y="18" width="1" height="3" fill="#7a7a7a"/><text x="1156.0" y="19" font-family="Liberation Sans" font-size="14" fill="#bdbdbd">1600</text></g></svg>
<svg style="position:absolute;left:51px;top:133px;overflow:hidden" width="21" height="865"><g><rect x="0" y="-119.0" width="21" height="1" fill="#8c8c8c"/><rect x="18" y="-112.4" width="3" height="1" fill="#7a7a7a"/><rect x="18" y="-105.7" width="3" height="1" fill="#7a7a7a"/><rect x="18" y="-99.0" width="3" height="1" fill="#7a7a7a"/><rect x="18" y="-92.4" width="3" height="1" fill="#7a7a7a"/><rect x="15" y="-85.7" width="6" height="1" fill="#7a7a7a"/><rect x="18" y="-79.0" width="3" height="1" fill="#7a7a7a"/><rect x="18" y="-72.4" width="3" height="1" fill="#7a7a7a"/><rect x="18" y="-65.7" width="3" height="1" fill="#7a7a7a"/><rect x="18" y="-59.0" width="3" height="1" fill="#7a7a7a"/><rect x="0" y="-52.4" width="21" height="1" fill="#8c8c8c"/><rect x="18" y="-45.7" width="3" height="1" fill="#7a7a7a"/><rect x="18" y="-39.0" width="3" height="1" fill="#7a7a7a"/><rect x="18" y="-32.4" width="3" height="1" fill="#7a7a7a"/><rect x="18" y="-25.7" width="3" height="1" fill="#7a7a7a"/><rect x="15" y="-19.0" width="6" height="1" fill="#7a7a7a"/><rect x="18" y="-12.4" width="3" height="1" fill="#7a7a7a"/><rect x="18" y="-5.7" width="3" height="1" fill="#7a7a7a"/><rect x="18" y="1.0" width="3" height="1" fill="#7a7a7a"/><rect x="18" y="7.6" width="3" height="1" fill="#7a7a7a"/><text x="2" y="-38.4" font-family="Liberation Sans" font-size="14" fill="#bdbdbd">1</text><text x="2" y="-23.1" font-family="Liberation Sans" font-size="14" fill="#bdbdbd">0</text><text x="2" y="-7.8" font-family="Liberation Sans" font-size="14" fill="#bdbdbd">0</text><rect x="0" y="14.3" width="21" height="1" fill="#8c8c8c"/><rect x="18" y="21.0" width="3" height="1" fill="#7a7a7a"/><rect x="18" y="27.6" width="3" height="1" fill="#7a7a7a"/><rect x="18" y="34.3" width="3" height="1" fill="#7a7a7a"/><rect x="18" y="41.0" width="3" height="1" fill="#7a7a7a"/><rect x="15" y="47.6" width="6" height="1" fill="#7a7a7a"/><rect x="18" y="54.3" width="3" height="1" fill="#7a7a7a"/><rect x="18" y="61.0" width="3" height="1" fill="#7a7a7a"/><rect x="18" y="67.6" width="3" height="1" fill="#7a7a7a"/><rect x="18" y="74.3" width="3" height="1" fill="#7a7a7a"/><text x="2" y="28.3" font-family="Liberation Sans" font-size="14" fill="#bdbdbd">2</text><text x="2" y="43.6" font-family="Liberation Sans" font-size="14" fill="#bdbdbd">0</text><text x="2" y="58.9" font-family="Liberation Sans" font-size="14" fill="#bdbdbd">0</text><rect x="0" y="81.0" width="21" height="1" fill="#8c8c8c"/><rect x="18" y="87.6" width="3" height="1" fill="#7a7a7a"/><rect x="18" y="94.3" width="3" height="1" fill="#7a7a7a"/><rect x="18" y="101.0" width="3" height="1" fill="#7a7a7a"/><rect x="18" y="107.6" width="3" height="1" fill="#7a7a7a"/><rect x="15" y="114.3" width="6" height="1" fill="#7a7a7a"/><rect x="18" y="121.0" width="3" height="1" fill="#7a7a7a"/><rect x="18" y="127.6" width="3" height="1" fill="#7a7a7a"/><rect x="18" y="134.3" width="3" height="1" fill="#7a7a7a"/><rect x="18" y="141.0" width="3" height="1" fill="#7a7a7a"/><text x="2" y="95.0" font-family="Liberation Sans" font-size="14" fill="#bdbdbd">3</text><text x="2" y="110.3" font-family="Liberation Sans" font-size="14" fill="#bdbdbd">0</text><text x="2" y="125.6" font-family="Liberation Sans" font-size="14" fill="#bdbdbd">0</text><rect x="0" y="147.6" width="21" height="1" fill="#8c8c8c"/><rect x="18" y="154.3" width="3" height="1" fill="#7a7a7a"/><rect x="18" y="161.0" width="3" height="1" fill="#7a7a7a"/><rect x="18" y="167.6" width="3" height="1" fill="#7a7a7a"/><rect x="18" y="174.3" width="3" height="1" fill="#7a7a7a"/><rect x="15" y="181.0" width="6" height="1" fill="#7a7a7a"/><rect x="18" y="187.6" width="3" height="1" fill="#7a7a7a"/><rect x="18" y="194.3" width="3" height="1" fill="#7a7a7a"/><rect x="18" y="201.0" width="3" height="1" fill="#7a7a7a"/><rect x="18" y="207.6" width="3" height="1" fill="#7a7a7a"/><text x="2" y="161.6" font-family="Liberation Sans" font-size="14" fill="#bdbdbd">4</text><text x="2" y="176.9" font-family="Liberation Sans" font-size="14" fill="#bdbdbd">0</text><text x="2" y="192.2" font-family="Liberation Sans" font-size="14" fill="#bdbdbd">0</text><rect x="0" y="214.3" width="21" height="1" fill="#8c8c8c"/><rect x="18" y="221.0" width="3" height="1" fill="#7a7a7a"/><rect x="18" y="227.6" width="3" height="1" fill="#7a7a7a"/><rect x="18" y="234.3" width="3" height="1" fill="#7a7a7a"/><rect x="18" y="241.0" width="3" height="1" fill="#7a7a7a"/><rect x="15" y="247.6" width="6" height="1" fill="#7a7a7a"/><rect x="18" y="254.3" width="3" height="1" fill="#7a7a7a"/><rect x="18" y="261.0" width="3" height="1" fill="#7a7a7a"/><rect x="18" y="267.6" width="3" height="1" fill="#7a7a7a"/><rect x="18" y="274.3" width="3" height="1" fill="#7a7a7a"/><text x="2" y="228.3" font-family="Liberation Sans" font-size="14" fill="#bdbdbd">5</text><text x="2" y="243.6" font-family="Liberation Sans" font-size="14" fill="#bdbdbd">0</text><text x="2" y="258.9" font-family="Liberation Sans" font-size="14" fill="#bdbdbd">0</text><rect x="0" y="281.0" width="21" height="1" fill="#8c8c8c"/><rect x="18" y="287.6" width="3" height="1" fill="#7a7a7a"/><rect x="18" y="294.3" width="3" height="1" fill="#7a7a7a"/><rect x="18" y="301.0" width="3" height="1" fill="#7a7a7a"/><rect x="18" y="307.6" width="3" height="1" fill="#7a7a7a"/><rect x="15" y="314.3" width="6" height="1" fill="#7a7a7a"/><rect x="18" y="321.0" width="3" height="1" fill="#7a7a7a"/><rect x="18" y="327.6" width="3" height="1" fill="#7a7a7a"/><rect x="18" y="334.3" width="3" height="1" fill="#7a7a7a"/><rect x="18" y="341.0" width="3" height="1" fill="#7a7a7a"/><text x="2" y="295.0" font-family="Liberation Sans" font-size="14" fill="#bdbdbd">6</text><text x="2" y="310.3" font-family="Liberation Sans" font-size="14" fill="#bdbdbd">0</text><text x="2" y="325.6" font-family="Liberation Sans" font-size="14" fill="#bdbdbd">0</text><rect x="0" y="347.6" width="21" height="1" fill="#8c8c8c"/><rect x="18" y="354.3" width="3" height="1" fill="#7a7a7a"/><rect x="18" y="361.0" width="3" height="1" fill="#7a7a7a"/><rect x="18" y="367.6" width="3" height="1" fill="#7a7a7a"/><rect x="18" y="374.3" width="3" height="1" fill="#7a7a7a"/><rect x="15" y="381.0" width="6" height="1" fill="#7a7a7a"/><rect x="18" y="387.6" width="3" height="1" fill="#7a7a7a"/><rect x="18" y="394.3" width="3" height="1" fill="#7a7a7a"/><rect x="18" y="401.0" width="3" height="1" fill="#7a7a7a"/><rect x="18" y="407.6" width="3" height="1" fill="#7a7a7a"/><text x="2" y="361.6" font-family="Liberation Sans" font-size="14" fill="#bdbdbd">7</text><text x="2" y="376.9" font-family="Liberation Sans" font-size="14" fill="#bdbdbd">0</text><text x="2" y="392.2" font-family="Liberation Sans" font-size="14" fill="#bdbdbd">0</text><rect x="0" y="414.3" width="21" height="1" fill="#8c8c8c"/><rect x="18" y="421.0" width="3" height="1" fill="#7a7a7a"/><rect x="18" y="427.6" width="3" height="1" fill="#7a7a7a"/><rect x="18" y="434.3" width="3" height="1" fill="#7a7a7a"/><rect x="18" y="441.0" width="3" height="1" fill="#7a7a7a"/><rect x="15" y="447.6" width="6" height="1" fill="#7a7a7a"/><rect x="18" y="454.3" width="3" height="1" fill="#7a7a7a"/><rect x="18" y="461.0" width="3" height="1" fill="#7a7a7a"/><rect x="18" y="467.6" width="3" height="1" fill="#7a7a7a"/><rect x="18" y="474.3" width="3" height="1" fill="#7a7a7a"/><text x="2" y="428.3" font-family="Liberation Sans" font-size="14" fill="#bdbdbd">8</text><text x="2" y="443.6" font-family="Liberation Sans" font-size="14" fill="#bdbdbd">0</text><text x="2" y="458.9" font-family="Liberation Sans" font-size="14" fill="#bdbdbd">0</text><rect x="0" y="481.0" width="21" height="1" fill="#8c8c8c"/><rect x="18" y="487.6" width="3" height="1" fill="#7a7a7a"/><rect x="18" y="494.3" width="3" height="1" fill="#7a7a7a"/><rect x="18" y="501.0" width="3" height="1" fill="#7a7a7a"/><rect x="18" y="507.6" width="3" height="1" fill="#7a7a7a"/><rect x="15" y="514.3" width="6" height="1" fill="#7a7a7a"/><rect x="18" y="521.0" width="3" height="1" fill="#7a7a7a"/><rect x="18" y="527.6" width="3" height="1" fill="#7a7a7a"/><rect x="18" y="534.3" width="3" height="1" fill="#7a7a7a"/><rect x="18" y="541.0" width="3" height="1" fill="#7a7a7a"/><text x="2" y="495.0" font-family="Liberation Sans" font-size="14" fill="#bdbdbd">9</text><text x="2" y="510.3" font-family="Liberation Sans" font-size="14" fill="#bdbdbd">0</text><text x="2" y="525.6" font-family="Liberation Sans" font-size="14" fill="#bdbdbd">0</text><rect x="0" y="547.6" width="21" height="1" fill="#8c8c8c"/><rect x="18" y="554.3" width="3" height="1" fill="#7a7a7a"/><rect x="18" y="561.0" width="3" height="1" fill="#7a7a7a"/><rect x="18" y="567.6" width="3" height="1" fill="#7a7a7a"/><rect x="18" y="574.3" width="3" height="1" fill="#7a7a7a"/><rect x="15" y="581.0" width="6" height="1" fill="#7a7a7a"/><rect x="18" y="587.6" width="3" height="1" fill="#7a7a7a"/><rect x="18" y="594.3" width="3" height="1" fill="#7a7a7a"/><rect x="18" y="601.0" width="3" height="1" fill="#7a7a7a"/><rect x="18" y="607.6" width="3" height="1" fill="#7a7a7a"/><text x="2" y="561.6" font-family="Liberation Sans" font-size="14" fill="#bdbdbd">1</text><text x="2" y="576.9" font-family="Liberation Sans" font-size="14" fill="#bdbdbd">0</text><text x="2" y="592.2" font-family="Liberation Sans" font-size="14" fill="#bdbdbd">0</text><text x="2" y="607.5" font-family="Liberation Sans" font-size="14" fill="#bdbdbd">0</text><rect x="0" y="614.3" width="21" height="1" fill="#8c8c8c"/><rect x="18" y="621.0" width="3" height="1" fill="#7a7a7a"/><rect x="18" y="627.6" width="3" height="1" fill="#7a7a7a"/><rect x="18" y="634.3" width="3" height="1" fill="#7a7a7a"/><rect x="18" y="641.0" width="3" height="1" fill="#7a7a7a"/><rect x="15" y="647.6" width="6" height="1" fill="#7a7a7a"/><rect x="18" y="654.3" width="3" height="1" fill="#7a7a7a"/><rect x="18" y="661.0" width="3" height="1" fill="#7a7a7a"/><rect x="18" y="667.6" width="3" height="1" fill="#7a7a7a"/><rect x="18" y="674.3" width="3" height="1" fill="#7a7a7a"/><text x="2" y="628.3" font-family="Liberation Sans" font-size="14" fill="#bdbdbd">1</text><text x="2" y="643.6" font-family="Liberation Sans" font-size="14" fill="#bdbdbd">1</text><text x="2" y="658.9" font-family="Liberation Sans" font-size="14" fill="#bdbdbd">0</text><text x="2" y="674.2" font-family="Liberation Sans" font-size="14" fill="#bdbdbd">0</text><rect x="0" y="681.0" width="21" height="1" fill="#8c8c8c"/><rect x="18" y="687.6" width="3" height="1" fill="#7a7a7a"/><rect x="18" y="694.3" width="3" height="1" fill="#7a7a7a"/><rect x="18" y="701.0" width="3" height="1" fill="#7a7a7a"/><rect x="18" y="707.6" width="3" height="1" fill="#7a7a7a"/><rect x="15" y="714.3" width="6" height="1" fill="#7a7a7a"/><rect x="18" y="721.0" width="3" height="1" fill="#7a7a7a"/><rect x="18" y="727.6" width="3" height="1" fill="#7a7a7a"/><rect x="18" y="734.3" width="3" height="1" fill="#7a7a7a"/><rect x="18" y="741.0" width="3" height="1" fill="#7a7a7a"/><text x="2" y="695.0" font-family="Liberation Sans" font-size="14" fill="#bdbdbd">1</text><text x="2" y="710.3" font-family="Liberation Sans" font-size="14" fill="#bdbdbd">2</text><text x="2" y="725.6" font-family="Liberation Sans" font-size="14" fill="#bdbdbd">0</text><text x="2" y="740.9" font-family="Liberation Sans" font-size="14" fill="#bdbdbd">0</text><rect x="0" y="747.6" width="21" height="1" fill="#8c8c8c"/><rect x="18" y="754.3" width="3" height="1" fill="#7a7a7a"/><rect x="18" y="761.0" width="3" height="1" fill="#7a7a7a"/><rect x="18" y="767.6" width="3" height="1" fill="#7a7a7a"/><rect x="18" y="774.3" width="3" height="1" fill="#7a7a7a"/><rect x="15" y="781.0" width="6" height="1" fill="#7a7a7a"/><rect x="18" y="787.6" width="3" height="1" fill="#7a7a7a"/><rect x="18" y="794.3" width="3" height="1" fill="#7a7a7a"/><rect x="18" y="801.0" width="3" height="1" fill="#7a7a7a"/><rect x="18" y="807.6" width="3" height="1" fill="#7a7a7a"/><text x="2" y="761.6" font-family="Liberation Sans" font-size="14" fill="#bdbdbd">1</text><text x="2" y="776.9" font-family="Liberation Sans" font-size="14" fill="#bdbdbd">3</text><text x="2" y="792.2" font-family="Liberation Sans" font-size="14" fill="#bdbdbd">0</text><text x="2" y="807.5" font-family="Liberation Sans" font-size="14" fill="#bdbdbd">0</text><rect x="0" y="814.3" width="21" height="1" fill="#8c8c8c"/><rect x="18" y="821.0" width="3" height="1" fill="#7a7a7a"/><rect x="18" y="827.6" width="3" height="1" fill="#7a7a7a"/><rect x="18" y="834.3" width="3" height="1" fill="#7a7a7a"/><rect x="18" y="841.0" width="3" height="1" fill="#7a7a7a"/><rect x="15" y="847.6" width="6" height="1" fill="#7a7a7a"/><rect x="18" y="854.3" width="3" height="1" fill="#7a7a7a"/><rect x="18" y="861.0" width="3" height="1" fill="#7a7a7a"/><rect x="18" y="867.6" width="3" height="1" fill="#7a7a7a"/><rect x="18" y="874.3" width="3" height="1" fill="#7a7a7a"/><text x="2" y="828.3" font-family="Liberation Sans" font-size="14" fill="#bdbdbd">1</text><text x="2" y="843.6" font-family="Liberation Sans" font-size="14" fill="#bdbdbd">4</text><text x="2" y="858.9" font-family="Liberation Sans" font-size="14" fill="#bdbdbd">0</text><text x="2" y="874.2" font-family="Liberation Sans" font-size="14" fill="#bdbdbd">0</text><rect x="0" y="881.0" width="21" height="1" fill="#8c8c8c"/><rect x="18" y="887.6" width="3" height="1" fill="#7a7a7a"/><rect x="18" y="894.3" width="3" height="1" fill="#7a7a7a"/><rect x="18" y="901.0" width="3" height="1" fill="#7a7a7a"/><rect x="18" y="907.6" width="3" height="1" fill="#7a7a7a"/><rect x="15" y="914.3" width="6" height="1" fill="#7a7a7a"/><rect x="18" y="921.0" width="3" height="1" fill="#7a7a7a"/><rect x="18" y="927.6" width="3" height="1" fill="#7a7a7a"/><rect x="18" y="934.3" width="3" height="1" fill="#7a7a7a"/><rect x="18" y="941.0" width="3" height="1" fill="#7a7a7a"/><text x="2" y="895.0" font-family="Liberation Sans" font-size="14" fill="#bdbdbd">1</text><text x="2" y="910.3" font-family="Liberation Sans" font-size="14" fill="#bdbdbd">5</text><text x="2" y="925.6" font-family="Liberation Sans" font-size="14" fill="#bdbdbd">0</text><text x="2" y="940.9" font-family="Liberation Sans" font-size="14" fill="#bdbdbd">0</text></g></svg>
<div style="position:absolute;left:403px;top:374px;width:133px;height:67px;background:#8c7f58;"></div>
<div style="position:absolute;left:697px;top:376px;width:67px;height:67px;border-radius:50%;background:#8c7f58;"></div>
<div class="t" style="left:402px;top:452px;font-size:40px;line-height:46px;color:#42d8c8;font-family:'Liberation Serif',serif;">200<span style="display:inline-block;transform:translateY(5px) scale(1.15)">*</span>100</div>
<div class="t" style="left:697px;top:452px;font-size:40px;line-height:46px;color:#42d8c8;font-family:'Liberation Serif',serif;">100<span style="display:inline-block;transform:translateY(5px) scale(1.15)">*</span>100</div>
<div class="t" style="left:512px;top:577px;font-size:40px;line-height:46px;color:#42d8c8;font-family:'Liberation Serif',serif;">字体大小：60</div>
<div class="t" style="left:512px;top:645px;font-size:40px;line-height:46px;color:#42d8c8;font-family:'Liberation Serif',serif;">画布大小：2000<span style="display:inline-block;transform:translateY(5px) scale(1.15)">*</span>1600</div>
<div style="position:absolute;left:1245px;top:87px;width:315px;height:208px;background:#535353;box-shadow:0 1px 3px rgba(0,0,0,0.45);"></div>
<div style="position:absolute;left:1245px;top:87px;width:315px;height:4px;background:#373737;"></div>
<div style="position:absolute;left:1245px;top:91px;width:315px;height:34px;background:#424242;"></div>
<div style="position:absolute;left:1246px;top:91px;width:77px;height:34px;background:#535353;"></div>
<div class="t" style="left:1257px;top:99px;font-size:14px;line-height:18px;color:#e6e6e6;">历史记录</div>
<svg style="position:absolute;left:1515px;top:102px;" width="14" height="11" viewBox="0 0 14 11"><path d="M1 1 L6 5.5 L1 10 M7 1 L12 5.5 L7 10" fill="none" stroke="#cfcfcf" stroke-width="1.2"/></svg>
<div style="position:absolute;left:1534px;top:101px;width:1px;height:14px;background:#bdbdbd;"></div>
<svg style="position:absolute;left:1542px;top:103px;" width="11" height="9" viewBox="0 0 11 9"><path d="M0 1 H11 M0 3.5 H11 M0 6 H11 M0 8.5 H11" stroke="#cfcfcf" stroke-width="1"/></svg>
<div style="position:absolute;left:1247px;top:126px;width:292px;height:11px;background:#535353;"></div>
<div style="position:absolute;left:1293px;top:132px;width:14px;height:1px;background:#8a8a8a;"></div>
<div style="position:absolute;left:1247px;top:137px;width:292px;height:28px;background:#535353;"></div>
<div style="position:absolute;left:1247px;top:165px;width:292px;height:1px;background:#474747;"></div>
<div style="position:absolute;left:1254px;top:145px;width:14px;height:14px;background:transparent;border:1px solid #484848;box-sizing:border-box;"></div>
<svg style="position:absolute;left:1285px;top:142px;" width="20" height="19" viewBox="0 0 20 19"><path d="M1 1 H8 L10 3 H19 V18 H1 Z" fill="#dedede"/><path d="M4 7 H16 M4 10 H16 M4 13 H16 M4 16 H16" stroke="#535353" stroke-width="1.2"/></svg>
<div class="t" style="left:1319px;top:141px;font-size:14px;line-height:20px;color:#e6e6e6;">删除图层</div>
<div style="position:absolute;left:1247px;top:166px;width:292px;height:28px;background:#535353;"></div>
<div style="position:absolute;left:1247px;top:194px;width:292px;height:1px;background:#474747;"></div>
<div style="position:absolute;left:1254px;top:174px;width:14px;height:14px;background:transparent;border:1px solid #484848;box-sizing:border-box;"></div>
<svg style="position:absolute;left:1285px;top:171px;" width="20" height="19" viewBox="0 0 20 19"><path d="M1 1 H8 L10 3 H19 V18 H1 Z" fill="#dedede"/><path d="M4 7 H16 M4 10 H16 M4 13 H16 M4 16 H16" stroke="#535353" stroke-width="1.2"/></svg>
<div class="t" style="left:1319px;top:170px;font-size:14px;line-height:20px;color:#e6e6e6;">删除图层</div>
<div style="position:absolute;left:1247px;top:194px;width:292px;height:28px;background:#535353;"></div>
<div style="position:absolute;left:1247px;top:222px;width:292px;height:1px;background:#474747;"></div>
<div style="position:absolute;left:1254px;top:202px;width:14px;height:14px;background:transparent;border:1px solid #484848;box-sizing:border-box;"></div>
<svg style="position:absolute;left:1285px;top:198px;" width="20" height="22" viewBox="0 0 20 22"><text x="1" y="19" font-family="Liberation Serif" font-weight="bold" font-size="22" fill="#dedede">T</text></svg>
<div class="t" style="left:1319px;top:198px;font-size:14px;line-height:20px;color:#e6e6e6;">编辑文字图层</div>
<div style="position:absolute;left:1247px;top:223px;width:292px;height:28px;background:#6b6b6b;"></div>
<div style="position:absolute;left:1247px;top:251px;width:292px;height:1px;background:#474747;"></div>
<div style="position:absolute;left:1254px;top:231px;width:14px;height:14px;background:transparent;border:1px solid #484848;box-sizing:border-box;"></div>
<svg style="position:absolute;left:1285px;top:227px;" width="20" height="22" viewBox="0 0 20 22"><text x="1" y="19" font-family="Liberation Serif" font-weight="bold" font-size="22" fill="#dedede">T</text></svg>
<div class="t" style="left:1319px;top:227px;font-size:14px;line-height:20px;color:#e6e6e6;">编辑文字图层</div>
<div style="position:absolute;left:1540px;top:137px;width:17px;height:115px;background:#474747;"></div>
<svg style="position:absolute;left:1544px;top:142px;" width="10" height="6" viewBox="0 0 10 6"><path d="M1 5 L5 1 L9 5" fill="none" stroke="#7a7a7a" stroke-width="1.1"/></svg>
<div style="position:absolute;left:1542px;top:220px;width:13px;height:13px;background:#676767;"></div>
<svg style="position:absolute;left:1544px;top:235px;" width="10" height="6" viewBox="0 0 10 6"><path d="M1 1 L5 5 L9 1" fill="none" stroke="#7a7a7a" stroke-width="1.1"/></svg>
<div style="position:absolute;left:1245px;top:252px;width:315px;height:1px;background:#474747;"></div>
<svg style="position:absolute;left:1429px;top:261px;" width="20" height="16" viewBox="0 0 20 16"><path d="M7 3 H14 L18 7 V15 H7 Z" fill="#dcdcdc"/><path d="M1 9 H9 M5 5 V13" stroke="#535353" stroke-width="4"/><path d="M1 9 H9 M5 5 V13" stroke="#dcdcdc" stroke-width="2.4"/></svg>
<svg style="position:absolute;left:1471px;top:261px;" width="20" height="16" viewBox="0 0 20 16"><path d="M2 4 H6 L8 1.5 H12 L14 4 H18 V14 H2 Z" fill="#dcdcdc"/><circle cx="10" cy="9" r="3.2" fill="#535353"/><circle cx="10" cy="9" r="2" fill="#dcdcdc"/></svg>
<svg style="position:absolute;left:1509px;top:259px;" width="17" height="19" viewBox="0 0 17 19"><path d="M2 4 H15 M6 4 V2 H11 V4" fill="none" stroke="#dcdcdc" stroke-width="1.6"/><path d="M3.5 6 H13.5 V18 H3.5 Z" fill="none" stroke="#dcdcdc" stroke-width="1.6"/><path d="M7 8 V16 M10 8 V16" stroke="#dcdcdc" stroke-width="1.3"/></svg>
<div style="position:absolute;left:1245px;top:285px;width:315px;height:2px;background:#3a3a3a;"></div>
<div style="position:absolute;left:1245px;top:287px;width:315px;height:8px;background:#4a4a4a;"></div>
<svg style="position:absolute;left:1391px;top:289px;" width="22" height="3" viewBox="0 0 22 3"><rect x="0.0" y="0" width="1.3" height="3" fill="#3c3c3c"/><rect x="2.6" y="0" width="1.3" height="3" fill="#3c3c3c"/><rect x="5.2" y="0" width="1.3" height="3" fill="#3c3c3c"/><rect x="7.800000000000001" y="0" width="1.3" height="3" fill="#3c3c3c"/><rect x="10.4" y="0" width="1.3" height="3" fill="#3c3c3c"/><rect x="13.0" y="0" width="1.3" height="3" fill="#3c3c3c"/><rect x="15.600000000000001" y="0" width="1.3" height="3" fill="#3c3c3c"/><rect x="18.2" y="0" width="1.3" height="3" fill="#3c3c3c"/></svg>
<div style="position:absolute;left:1560px;top:76px;width:360px;height:942px;background:#535353;"></div>
<div style="position:absolute;left:1560px;top:76px;width:360px;height:14px;background:#424242;"></div>
<svg style="position:absolute;left:1591px;top:79px;" width="10" height="8" viewBox="0 0 10 8"><path d="M4 1 L1 4 L4 7 M8 1 L5 4 L8 7" fill="none" stroke="#e0e0e0" stroke-width="1.3"/></svg>
<svg style="position:absolute;left:1900px;top:79px;" width="10" height="8" viewBox="0 0 10 8"><path d="M1 1 L4 4 L1 7 M5 1 L8 4 L5 7" fill="none" stroke="#e0e0e0" stroke-width="1.3"/></svg>
<div style="position:absolute;left:1558px;top:90px;width:3px;height:928px;background:#3b3b3b;"></div>
<div style="position:absolute;left:1607px;top:90px;width:3px;height:928px;background:#3f3f3f;"></div>
<div style="position:absolute;left:1563px;top:90px;width:43px;height:51px;background:#535353;"></div>
<svg style="position:absolute;left:1572px;top:96px;" width="24" height="4" viewBox="0 0 24 4"><rect x="0.0" y="0" width="1.3" height="4" fill="#474747"/><rect x="2.6" y="0" width="1.3" height="4" fill="#474747"/><rect x="5.2" y="0" width="1.3" height="4" fill="#474747"/><rect x="7.800000000000001" y="0" width="1.3" height="4" fill="#474747"/><rect x="10.4" y="0" width="1.3" height="4" fill="#474747"/><rect x="13.0" y="0" width="1.3" height="4" fill="#474747"/><rect x="15.600000000000001" y="0" width="1.3" height="4" fill="#474747"/><rect x="18.2" y="0" width="1.3" height="4" fill="#474747"/><rect x="20.8" y="0" width="1.3" height="4" fill="#474747"/></svg>
<div style="position:absolute;left:1567px;top:105px;width:35px;height:29px;background:#383838;border-radius:3px;"></div>
<svg style="position:absolute;left:1572px;top:106px;" width="26" height="26" viewBox="0 0 26 26"><rect x="4.1" y="4.1" width="4.8" height="4.8" fill="none" stroke="#dcdcdc" stroke-width="1.2"/><rect x="4.1" y="11.1" width="4.8" height="4.8" fill="none" stroke="#dcdcdc" stroke-width="1.2"/><rect x="3.5" y="17.8" width="6" height="6" fill="#dcdcdc"/><path d="M14.5 6 Q20.5 7 20.5 14 Q20.5 20.5 13.5 23.5" fill="none" stroke="#dcdcdc" stroke-width="2.4"/><path d="M11.5 6.5 L16 3 L16 10 Z" fill="#dcdcdc"/></svg>
<div style="position:absolute;left:1563px;top:141px;width:43px;height:2px;background:#3a3a3a;"></div>
<div style="position:absolute;left:1563px;top:143px;width:43px;height:85px;background:#535353;"></div>
<svg style="position:absolute;left:1572px;top:147px;" width="24" height="4" viewBox="0 0 24 4"><rect x="0.0" y="0" width="1.3" height="4" fill="#474747"/><rect x="2.6" y="0" width="1.3" height="4" fill="#474747"/><rect x="5.2" y="0" width="1.3" height="4" fill="#474747"/><rect x="7.800000000000001" y="0" width="1.3" height="4" fill="#474747"/><rect x="10.4" y="0" width="1.3" height="4" fill="#474747"/><rect x="13.0" y="0" width="1.3" height="4" fill="#474747"/><rect x="15.600000000000001" y="0" width="1.3" height="4" fill="#474747"/><rect x="18.2" y="0" width="1.3" height="4" fill="#474747"/><rect x="20.8" y="0" width="1.3" height="4" fill="#474747"/></svg>
<svg style="position:absolute;left:1570px;top:158px;" width="28" height="28" viewBox="0 0 28 28"><rect x="2" y="1.5" width="3" height="3" fill="#dcdcdc"/><rect x="2" y="6" width="3" height="3" fill="#dcdcdc"/><rect x="2" y="10.5" width="3" height="3" fill="#dcdcdc"/><path d="M6 3 H10.5 M6 7.5 H10.5 M6 12 H10.5" stroke="#dcdcdc" stroke-width="1.6"/><path d="M26.5 5.5 L17.5 15.5" stroke="#dcdcdc" stroke-width="3.6" stroke-linecap="round"/><path d="M17.5 15 Q19 19 15 21.5 Q11 23.5 6 23.5 Q9 19 11.5 17 Q15 14 17.5 15 Z" fill="#dcdcdc"/></svg>
<svg style="position:absolute;left:1570px;top:194px;" width="28" height="24" viewBox="0 0 28 24"><path d="M1 6.5 Q5 1.5 10 2.5 Q13.5 4.5 12 8 Q7 11 1 6.5 Z" fill="#dcdcdc"/><rect x="13" y="5.5" width="13" height="3" fill="#dcdcdc"/><rect x="3" y="15.5" width="12" height="3" fill="#dcdcdc"/><path d="M16 17 L26 10 Q29.5 17 26 24 Z" fill="#dcdcdc"/></svg>
<div style="position:absolute;left:1563px;top:228px;width:43px;height:2px;background:#3a3a3a;"></div>
<div style="position:absolute;left:1610px;top:90px;width:310px;height:35px;background:#424242;"></div>
<div style="position:absolute;left:1612px;top:91px;width:48px;height:34px;background:#4c4c4c;"></div>
<div style="position:absolute;left:1662px;top:91px;width:48px;height:34px;background:#4c4c4c;"></div>
<div style="position:absolute;left:1712px;top:91px;width:48px;height:34px;background:#535353;"></div>
<div class="t" style="left:1622px;top:98px;font-size:14px;line-height:18px;color:#a8a8a8;">渐变</div>
<div class="t" style="left:1672px;top:98px;font-size:14px;line-height:18px;color:#a8a8a8;">图案</div>
<div class="t" style="left:1722px;top:98px;font-size:14px;line-height:18px;color:#ececec;">颜色</div>
<svg style="position:absolute;left:1901px;top:103px;" width="11" height="9" viewBox="0 0 11 9"><path d="M0 1 H11 M0 3.5 H11 M0 6 H11 M0 8.5 H11" stroke="#cfcfcf" stroke-width="1"/></svg>
<div style="position:absolute;left:1621px;top:138px;width:27px;height:26px;background:#7a7a7a;"></div>
<div style="position:absolute;left:1636px;top:151px;width:22px;height:23px;background:#080808;border:1.5px solid #f2f2f2;box-sizing:border-box;"></div>
<div style="position:absolute;left:1623px;top:140px;width:23px;height:22px;background:#222f17;border:1.5px solid #f2f2f2;box-sizing:border-box;"></div>
<div style="position:absolute;left:1667px;top:134px;width:187px;height:341px;background:linear-gradient(to bottom, rgba(0,0,0,0), #000), linear-gradient(to right, #fff, #77ff00);"></div>
<div style="position:absolute;left:1756px;top:405px;width:11px;height:11px;border:1px solid #fff;border-radius:50%;"></div>
<div style="position:absolute;left:1875px;top:134px;width:24px;height:341px;background:linear-gradient(to bottom,#f00 0%,#f0f 16.67%,#00f 33.33%,#0ff 50%,#0f0 66.67%,#ff0 83.33%,#f00 100%);"></div>
<svg style="position:absolute;left:1863px;top:382px;" width="7" height="10" viewBox="0 0 7 10"><path d="M0 0 H3 L7 5 L3 10 H0 Z" fill="#f0f0f0"/></svg>
<div style="position:absolute;left:1610px;top:502px;width:310px;height:3px;background:#3c3c3c;"></div>
<div style="position:absolute;left:1610px;top:505px;width:310px;height:35px;background:#424242;"></div>
<div style="position:absolute;left:1612px;top:506px;width:48px;height:34px;background:#535353;"></div>
<div style="position:absolute;left:1662px;top:506px;width:47px;height:34px;background:#4c4c4c;"></div>
<div class="t" style="left:1622px;top:513px;font-size:14px;line-height:18px;color:#ececec;">图层</div>
<div class="t" style="left:1671px;top:513px;font-size:14px;line-height:18px;color:#a8a8a8;">通道</div>
<svg style="position:absolute;left:1901px;top:518px;" width="11" height="9" viewBox="0 0 11 9"><path d="M0 1 H11 M0 3.5 H11 M0 6 H11 M0 8.5 H11" stroke="#cfcfcf" stroke-width="1"/></svg>
<div style="position:absolute;left:1616px;top:553px;width:105px;height:25px;background:#454545;border:1px solid #4d4d4d;box-sizing:border-box;"></div>
<svg style="position:absolute;left:1624px;top:558px;" width="14" height="14" viewBox="0 0 14 14"><circle cx="5.5" cy="5.5" r="4" fill="none" stroke="#e0e0e0" stroke-width="1.6"/><path d="M8.5 8.5 L12.5 12.5" stroke="#e0e0e0" stroke-width="2"/></svg>
<div class="t" style="left:1643px;top:555px;font-size:14px;line-height:18px;color:#e8e8e8;">类型</div>
<svg style="position:absolute;left:1707px;top:565px;" width="9" height="5" viewBox="0 0 9 5"><path d="M1 1 L4.5 4 L8 1" fill="none" stroke="#c8c8c8" stroke-width="1.1"/></svg>
<svg style="position:absolute;left:1742px;top:556px;" width="17" height="15" viewBox="0 0 17 15"><rect x="1" y="1" width="15" height="13" fill="none" stroke="#d8d8d8" stroke-width="1.4"/><path d="M3 12 L7 6 L10 10 L12 8 L14 12 Z" fill="#d8d8d8"/></svg>
<svg style="position:absolute;left:1772px;top:556px;" width="16" height="16" viewBox="0 0 16 16"><circle cx="8" cy="8" r="6.5" fill="#535353" stroke="#d8d8d8" stroke-width="1.5"/><path d="M12.6 3.4 A6.5 6.5 0 0 1 3.4 12.6 Z" fill="#d8d8d8"/></svg>
<svg style="position:absolute;left:1802px;top:555px;" width="16" height="17" viewBox="0 0 16 17"><text x="1" y="15" font-family="Liberation Serif" font-weight="bold" font-size="17" fill="#d8d8d8">T</text></svg>
<svg style="position:absolute;left:1832px;top:555px;" width="17" height="17" viewBox="0 0 17 17"><rect x="3" y="3" width="11" height="11" fill="none" stroke="#d8d8d8" stroke-width="1.4"/><rect x="1" y="1" width="4" height="4" fill="#d8d8d8"/><rect x="12" y="1" width="4" height="4" fill="#d8d8d8"/><rect x="1" y="12" width="4" height="4" fill="#d8d8d8"/><rect x="12" y="12" width="4" height="4" fill="#d8d8d8"/></svg>
<svg style="position:absolute;left:1864px;top:555px;" width="15" height="17" viewBox="0 0 15 17"><path d="M5 1 H11 L14 4 V13 H5 Z" fill="#d8d8d8"/><rect x="1" y="8" width="8" height="8" fill="#a8a8a8"/></svg>
<div style="position:absolute;left:1900px;top:553px;width:11px;height:22px;background:#484848;border-radius:5.5px;"></div>
<div style="position:absolute;left:1900px;top:553px;width:11px;height:11px;border-radius:50%;background:#e4e4e4;"></div>
<div style="position:absolute;left:1610px;top:581px;width:310px;height:1px;background:#474747;"></div>
<div style="position:absolute;left:1616px;top:590px;width:144px;height:25px;background:#454545;border:1px solid #4d4d4d;box-sizing:border-box;"></div>
<div class="t" style="left:1625px;top:592px;font-size:14px;line-height:18px;color:#e8e8e8;">正常</div>
<svg style="position:absolute;left:1748px;top:602px;" width="9" height="5" viewBox="0 0 9 5"><path d="M1 1 L4.5 4 L8 1" fill="none" stroke="#c8c8c8" stroke-width="1.1"/></svg>
<div style="position:absolute;left:1763px;top:582px;width:1px;height:35px;background:#474747;"></div>
<div class="t" style="left:1771px;top:590px;font-size:14px;line-height:18px;color:#dcdcdc;">不透明度:</div>
<div style="position:absolute;left:1843px;top:590px;width:47px;height:20px;background:#454545;"></div>
<div style="position:absolute;left:1891px;top:590px;width:18px;height:20px;background:#454545;"></div>
<div class="t" style="left:1845px;top:591px;font-size:13px;line-height:18px;color:#e8e8e8;">100%</div>
<svg style="position:absolute;left:1896px;top:598px;" width="9" height="5" viewBox="0 0 9 5"><path d="M1 1 L4.5 4 L8 1" fill="none" stroke="#c8c8c8" stroke-width="1.1"/></svg>
<div style="position:absolute;left:1610px;top:617px;width:310px;height:1px;background:#474747;"></div>
<div class="t" style="left:1618px;top:626px;font-size:14px;line-height:18px;color:#dcdcdc;">锁定:</div>
<svg style="position:absolute;left:1666px;top:628px;" width="14" height="14" viewBox="0 0 14 14"><rect x="0.0" y="0.0" width="3.5" height="3.5" fill="#8a8a8a"/><rect x="3.5" y="0.0" width="3.5" height="3.5" fill="#5a5a5a"/><rect x="7.0" y="0.0" width="3.5" height="3.5" fill="#8a8a8a"/><rect x="10.5" y="0.0" width="3.5" height="3.5" fill="#5a5a5a"/><rect x="0.0" y="3.5" width="3.5" height="3.5" fill="#5a5a5a"/><rect x="3.5" y="3.5" width="3.5" height="3.5" fill="#8a8a8a"/><rect x="7.0" y="3.5" width="3.5" height="3.5" fill="#5a5a5a"/><rect x="10.5" y="3.5" width="3.5" height="3.5" fill="#8a8a8a"/><rect x="0.0" y="7.0" width="3.5" height="3.5" fill="#8a8a8a"/><rect x="3.5" y="7.0" width="3.5" height="3.5" fill="#5a5a5a"/><rect x="7.0" y="7.0" width="3.5" height="3.5" fill="#8a8a8a"/><rect x="10.5" y="7.0" width="3.5" height="3.5" fill="#5a5a5a"/><rect x="0.0" y="10.5" width="3.5" height="3.5" fill="#5a5a5a"/><rect x="3.5" y="10.5" width="3.5" height="3.5" fill="#8a8a8a"/><rect x="7.0" y="10.5" width="3.5" height="3.5" fill="#5a5a5a"/><rect x="10.5" y="10.5" width="3.5" height="3.5" fill="#8a8a8a"/></svg>
<svg style="position:absolute;left:1692px;top:627px;" width="16" height="17" viewBox="0 0 16 17"><path d="M7 11 L14 2 L15 3 L9 12 Z" fill="#7a7a7a"/><path d="M6 12 Q3 12 2 16 Q6 16 8 13 Z" fill="#7a7a7a"/></svg>
<svg style="position:absolute;left:1719px;top:627px;" width="16" height="16" viewBox="0 0 16 16"><path d="M8 1 V15 M1 8 H15" stroke="#d8d8d8" stroke-width="1.6"/><path d="M8 0 L5 3.5 H11 Z M8 16 L5 12.5 H11 Z M0 8 L3.5 5 V11 Z M16 8 L12.5 5 V11 Z" fill="#d8d8d8"/></svg>
<svg style="position:absolute;left:1746px;top:627px;" width="18" height="16" viewBox="0 0 18 16"><path d="M3 1 V13 H16 M1 4 H14 V15" fill="none" stroke="#d8d8d8" stroke-width="1.5"/><path d="M7 7 L12 11" stroke="#d8d8d8" stroke-width="1"/></svg>
<svg style="position:absolute;left:1776px;top:627px;" width="14" height="16" viewBox="0 0 14 16"><path d="M3.5 7 V4.5 A3.5 3.5 0 0 1 10.5 4.5 V7" fill="none" stroke="#d8d8d8" stroke-width="1.8"/><rect x="1" y="7" width="12" height="9" fill="#d8d8d8"/><rect x="6" y="10" width="2" height="3" fill="#535353"/></svg>
<div class="t" style="left:1800px;top:626px;font-size:14px;line-height:18px;color:#dcdcdc;">填充:</div>
<div style="position:absolute;left:1843px;top:626px;width:47px;height:20px;background:#454545;"></div>
<div style="position:absolute;left:1891px;top:626px;width:18px;height:20px;background:#454545;"></div>
<div class="t" style="left:1845px;top:627px;font-size:13px;line-height:18px;color:#e8e8e8;">100%</div>
<svg style="position:absolute;left:1896px;top:634px;" width="9" height="5" viewBox="0 0 9 5"><path d="M1 1 L4.5 4 L8 1" fill="none" stroke="#c8c8c8" stroke-width="1.1"/></svg>
<div style="position:absolute;left:1612px;top:655px;width:288px;height:332px;background:#535353;"></div>
<div style="position:absolute;left:1649px;top:657px;width:251px;height:91px;background:#6b6b6b;"></div>
<div style="position:absolute;left:1612px;top:748px;width:288px;height:1px;background:#474747;"></div>
<div style="position:absolute;left:1648px;top:657px;width:1px;height:91px;background:#474747;"></div>
<svg style="position:absolute;left:1620px;top:697px;" width="19" height="12" viewBox="0 0 19 12"><path d="M1 6 Q9.5 -2 18 6 Q9.5 14 1 6 Z" fill="#e0e0e0"/><circle cx="9.5" cy="6" r="3.4" fill="#4a4a4a"/><circle cx="10.4" cy="4.9" r="1" fill="#9a9a9a"/></svg>
<svg style="position:absolute;left:1693px;top:690px;" width="24" height="25" viewBox="0 0 24 25"><text x="1" y="22" font-family="Liberation Serif" font-weight="bold" font-size="25" fill="#e0e0e0">T</text></svg>
<div class="t" style="left:1766px;top:693px;font-size:14px;line-height:18px;color:#ececec;">画布大小 ...600</div>
<div style="position:absolute;left:1612px;top:840px;width:288px;height:1px;background:#474747;"></div>
<div style="position:absolute;left:1648px;top:749px;width:1px;height:91px;background:#474747;"></div>
<svg style="position:absolute;left:1620px;top:789px;" width="19" height="12" viewBox="0 0 19 12"><path d="M1 6 Q9.5 -2 18 6 Q9.5 14 1 6 Z" fill="#e0e0e0"/><circle cx="9.5" cy="6" r="3.4" fill="#4a4a4a"/><circle cx="10.4" cy="4.9" r="1" fill="#9a9a9a"/></svg>
<svg style="position:absolute;left:1693px;top:782px;" width="24" height="25" viewBox="0 0 24 25"><text x="1" y="22" font-family="Liberation Serif" font-weight="bold" font-size="25" fill="#e0e0e0">T</text></svg>
<div class="t" style="left:1766px;top:785px;font-size:14px;line-height:18px;color:#ececec;">字体大小：60</div>
<div style="position:absolute;left:1612px;top:932px;width:288px;height:1px;background:#474747;"></div>
<div style="position:absolute;left:1648px;top:841px;width:1px;height:91px;background:#474747;"></div>
<svg style="position:absolute;left:1620px;top:881px;" width="19" height="12" viewBox="0 0 19 12"><path d="M1 6 Q9.5 -2 18 6 Q9.5 14 1 6 Z" fill="#e0e0e0"/><circle cx="9.5" cy="6" r="3.4" fill="#4a4a4a"/><circle cx="10.4" cy="4.9" r="1" fill="#9a9a9a"/></svg>
<svg style="position:absolute;left:1693px;top:874px;" width="24" height="25" viewBox="0 0 24 25"><text x="1" y="22" font-family="Liberation Serif" font-weight="bold" font-size="25" fill="#e0e0e0">T</text></svg>
<div class="t" style="left:1766px;top:877px;font-size:14px;line-height:18px;color:#ececec;">100*100</div>
<svg style="position:absolute;left:1651px;top:660px;" width="105" height="86" viewBox="0 0 105 86"><path d="M1 35 V1 H35 M70 1 H104 V35 M104 51 V85 H70 M35 85 H1 V51" fill="none" stroke="#f4f4f4" stroke-width="1.6"/></svg>
<svg style="position:absolute;left:1620px;top:973px;" width="19" height="12" viewBox="0 0 19 12"><path d="M1 6 Q9.5 -2 18 6 Q9.5 14 1 6 Z" fill="#e0e0e0"/><circle cx="9.5" cy="6" r="3.4" fill="#4a4a4a"/><circle cx="10.4" cy="4.9" r="1" fill="#9a9a9a"/></svg>
<div style="position:absolute;left:1648px;top:933px;width:1px;height:55px;background:#474747;"></div>
<div style="position:absolute;left:1653px;top:941px;width:99px;height:47px;background:transparent;border:1px solid #3a3a3a;border-bottom:none;box-sizing:border-box;"></div>
<div style="position:absolute;left:1673px;top:956px;width:61px;height:31px;background-color:#fff;background-image:linear-gradient(45deg,#d9d9d9 25%,transparent 25%,transparent 75%,#d9d9d9 75%),linear-gradient(45deg,#d9d9d9 25%,transparent 25%,transparent 75%,#d9d9d9 75%);background-size:6px 6px;background-position:0 0,3px 3px;"></div>
<div style="position:absolute;left:1700px;top:969px;width:3px;height:3px;background:#6a7a50;"></div>
<div class="t" style="left:1766px;top:969px;font-size:14px;line-height:18px;color:#ececec;">椭圆 1</div>
<div style="position:absolute;left:1900px;top:657px;width:18px;height:330px;background:#484848;"></div>
<div style="position:absolute;left:1902px;top:677px;width:14px;height:146px;background:#676767;"></div>
<svg style="position:absolute;left:1904px;top:664px;" width="10" height="6" viewBox="0 0 10 6"><path d="M1 5 L5 1 L9 5" fill="none" stroke="#8a8a8a" stroke-width="1.1"/></svg>
<svg style="position:absolute;left:1904px;top:970px;" width="10" height="6" viewBox="0 0 10 6"><path d="M1 1 L5 5 L9 1" fill="none" stroke="#8a8a8a" stroke-width="1.1"/></svg>
<div style="position:absolute;left:1610px;top:987px;width:310px;height:31px;background:#535353;"></div>
<div style="position:absolute;left:1610px;top:987px;width:310px;height:1px;background:#474747;"></div>
<svg style="position:absolute;left:1663px;top:997px;" width="20" height="12" viewBox="0 0 20 12"><path d="M7 2 H4 A4 4 0 0 0 4 10 H7 M13 2 H16 A4 4 0 0 1 16 10 H13 M6 6 H14" fill="none" stroke="#9a9a9a" stroke-width="1.6"/></svg>
<div class="t" style="left:1698px;top:993px;font-size:16px;line-height:20px;color:#dcdcdc;font-style:italic;font-family:'Liberation Serif',serif;">fx</div>
<svg style="position:absolute;left:1715px;top:1010px;" width="4" height="3" viewBox="0 0 4 3"><path d="M0 0 H4 L2 3 Z" fill="#dcdcdc"/></svg>
<svg style="position:absolute;left:1732px;top:996px;" width="19" height="15" viewBox="0 0 19 15"><rect x="0" y="0" width="19" height="15" fill="#dcdcdc"/><circle cx="9.5" cy="7.5" r="4.2" fill="#535353"/></svg>
<svg style="position:absolute;left:1767px;top:995px;" width="17" height="17" viewBox="0 0 17 17"><circle cx="8.5" cy="8.5" r="7" fill="#535353" stroke="#dcdcdc" stroke-width="1.6"/><path d="M13.5 3.5 A7 7 0 0 1 3.5 13.5 Z" fill="#dcdcdc"/></svg>
<svg style="position:absolute;left:1782px;top:1010px;" width="4" height="3" viewBox="0 0 4 3"><path d="M0 0 H4 L2 3 Z" fill="#dcdcdc"/></svg>
<svg style="position:absolute;left:1800px;top:996px;" width="19" height="15" viewBox="0 0 19 15"><path d="M0 2 H7 L9 4 H19 V15 H0 Z" fill="#dcdcdc"/></svg>
<svg style="position:absolute;left:1833px;top:995px;" width="18" height="18" viewBox="0 0 18 18"><rect x="1" y="1" width="16" height="16" fill="none" stroke="#dcdcdc" stroke-width="1.6"/><path d="M9 4.5 V13.5 M4.5 9 H13.5" stroke="#dcdcdc" stroke-width="1.6"/></svg>
<svg style="position:absolute;left:1868px;top:994px;" width="17" height="19" viewBox="0 0 17 19"><path d="M1 4 H16 M6 4 V2 H11 V4" fill="none" stroke="#dcdcdc" stroke-width="1.6"/><path d="M3 6 H14 V18 H3 Z" fill="none" stroke="#dcdcdc" stroke-width="1.6"/><path d="M6.5 8 V16 M10.5 8 V16" stroke="#dcdcdc" stroke-width="1.3"/></svg>
<div style="position:absolute;left:1918px;top:76px;width:2px;height:942px;background:#3a3a3a;"></div>
</body></html>
